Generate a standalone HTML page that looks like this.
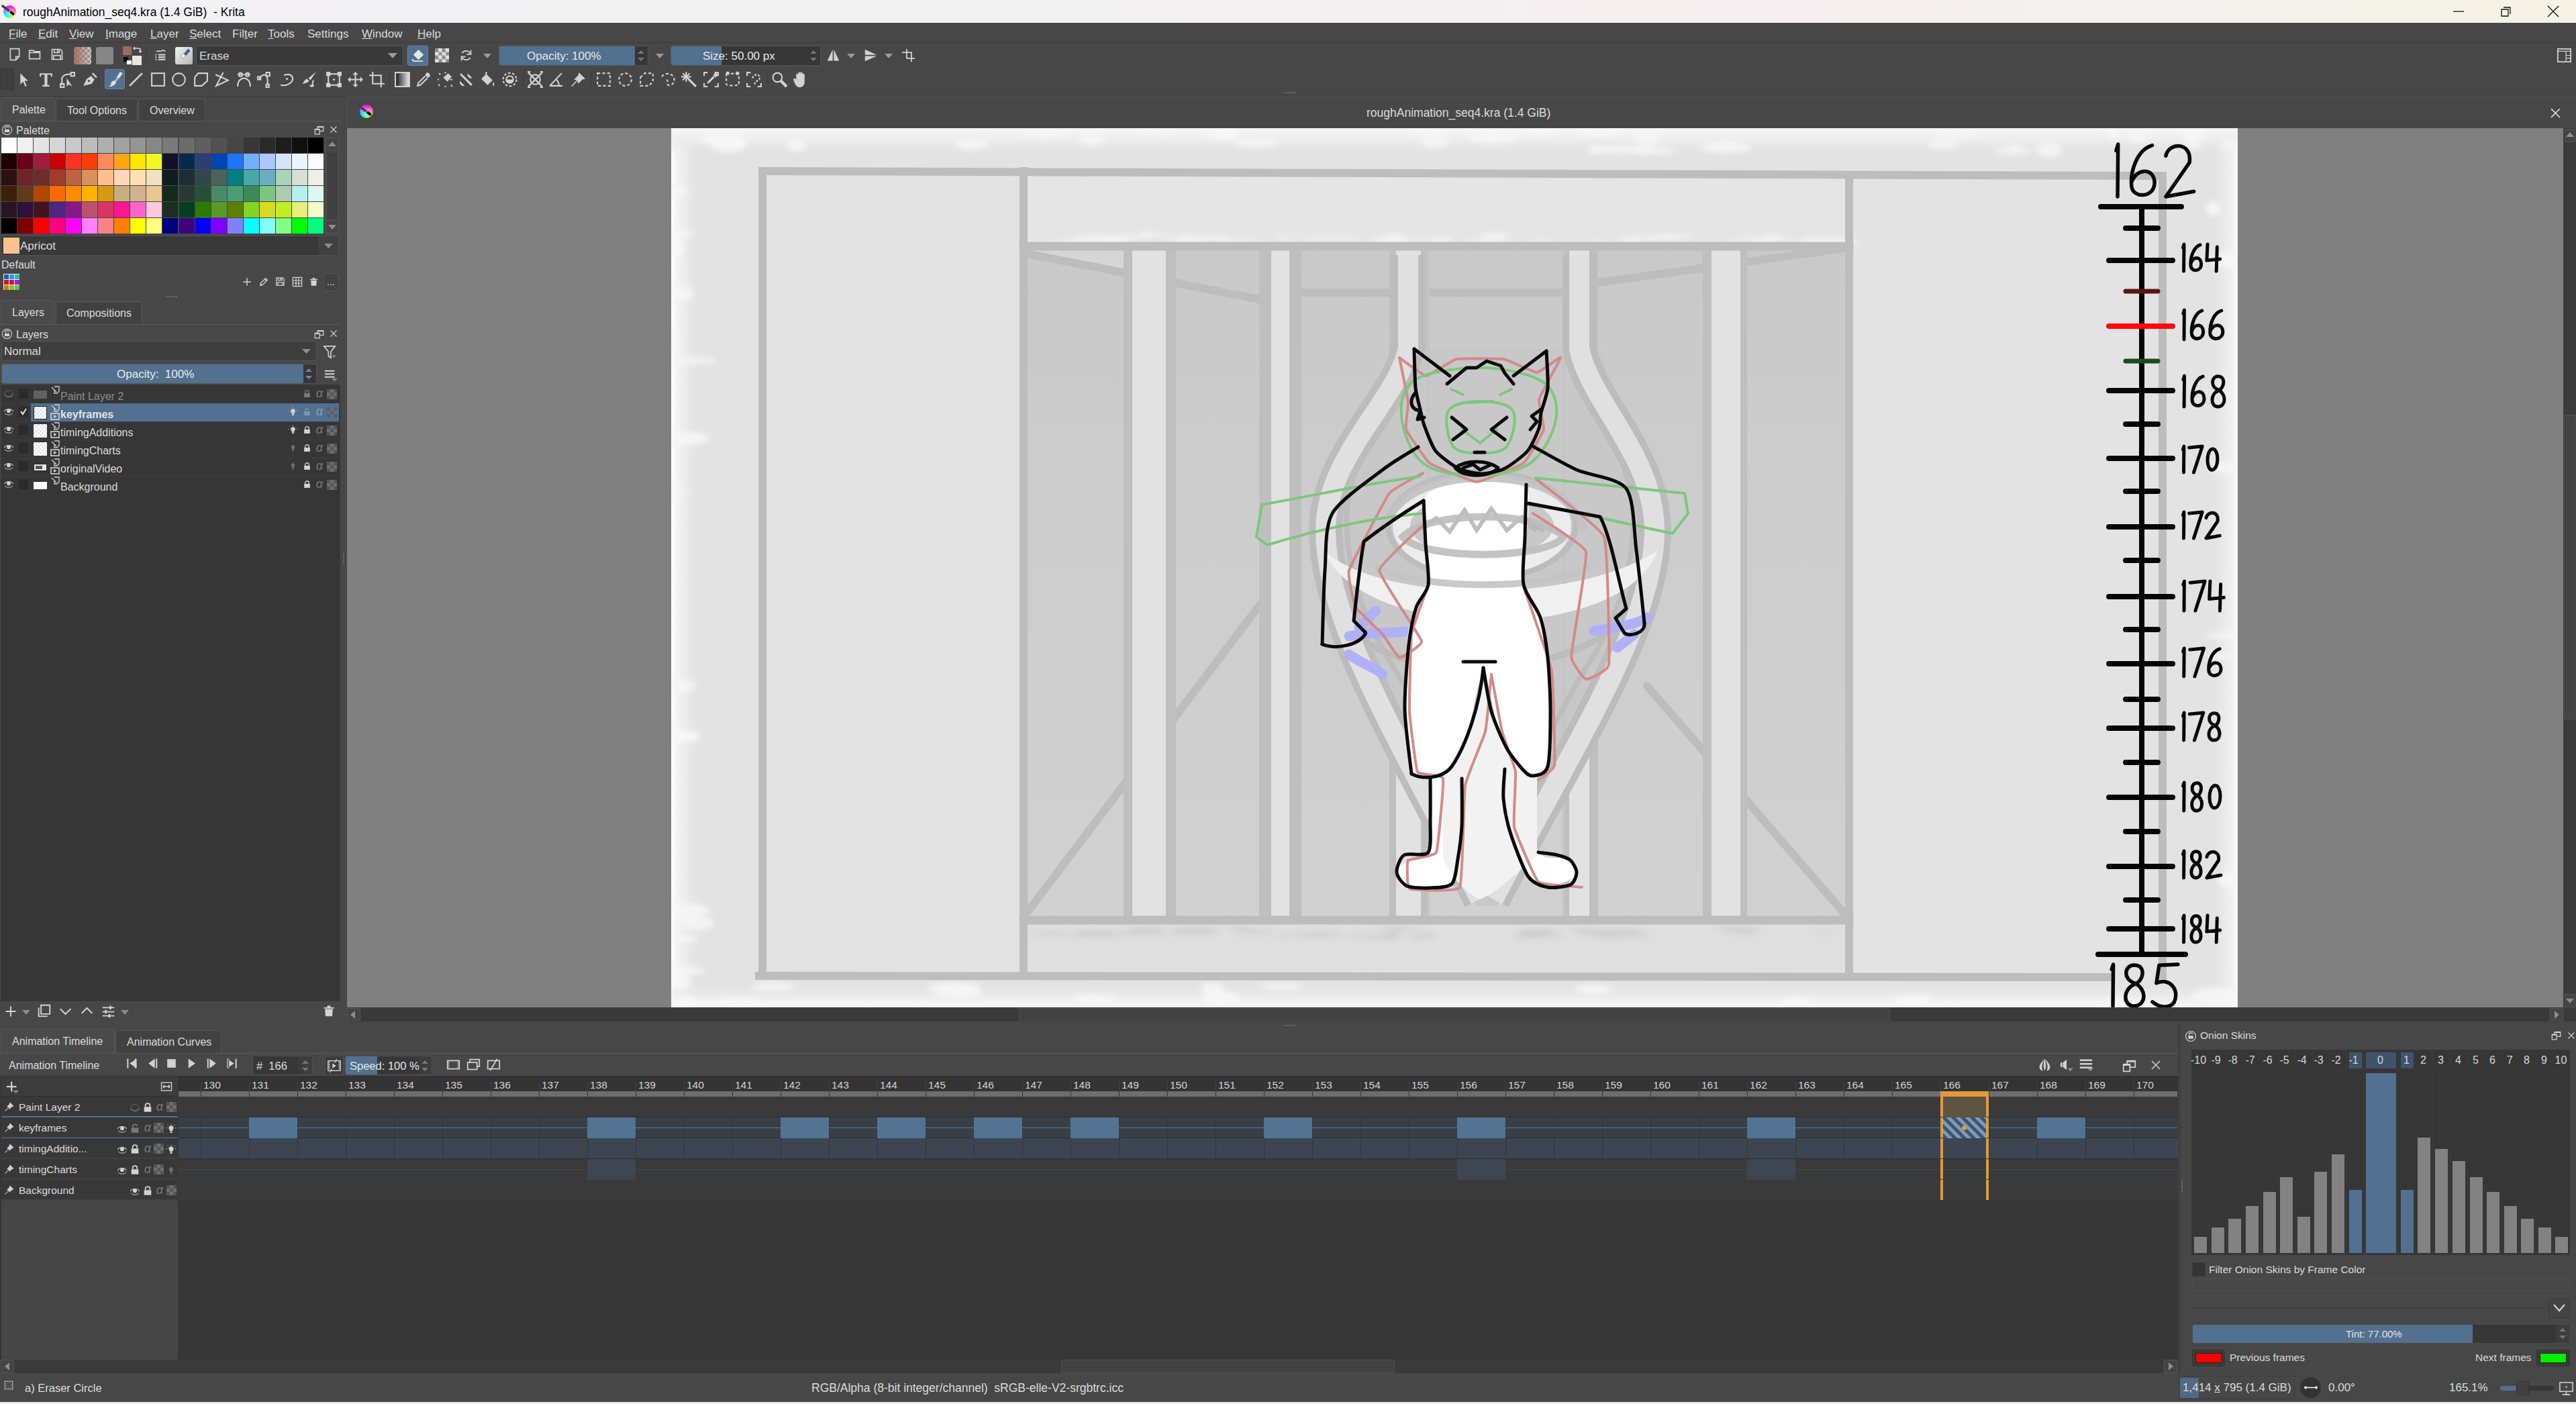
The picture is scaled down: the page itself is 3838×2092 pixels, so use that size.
<!DOCTYPE html>
<html><head><meta charset="utf-8"><title>Krita</title>
<style>
*{margin:0;padding:0;box-sizing:border-box}
html,body{width:3838px;height:2092px;overflow:hidden;background:#474747;font-family:"Liberation Sans",sans-serif;color:#d4d4d4}
.a{position:absolute}
.t{position:absolute;white-space:nowrap;line-height:1}
svg{position:absolute;overflow:visible}

</style></head><body>

<div class="a" style="left:0;top:0;width:3838px;height:34px;background:linear-gradient(90deg,#f3f1f4 0%,#f2f2f2 30%,#f4eef0 52%,#f3f2f0 70%,#f6f2e6 100%)"></div>
<!-- menu -->
<div class="a" style="left:0;top:34px;width:3838px;height:29px;background:#474747"></div>
<div class="a" style="left:0;top:62px;width:3838px;height:1px;background:#3c3c3c"></div>
<!-- toolbars -->
<div class="a" style="left:0;top:63px;width:3838px;height:81px;background:#474747"></div>
<div class="a" style="left:0;top:143px;width:3838px;height:1px;background:#3e3e3e"></div>
<!-- left dock -->
<div class="a" style="left:0;top:144px;width:512px;height:1381px;background:#474747"></div>
<!-- canvas window -->
<div class="a" style="left:517px;top:144px;width:3321px;height:47px;background:#474747;border-top:1px solid #575757;border-left:1px solid #575757;border-radius:3px 0 0 0"></div>
<div class="a" style="left:517px;top:191px;width:3302px;height:1310px;background:#808080"></div>
<div class="a" style="left:3819px;top:191px;width:19px;height:1310px;background:#3a3a3a"></div>
<div class="a" style="left:517px;top:1501px;width:3321px;height:21px;background:#3a3a3a"></div>
<!-- bottom docks -->
<div class="a" style="left:0;top:1525px;width:3838px;height:521px;background:#474747"></div>
<div class="a" style="left:0;top:1603px;width:3245px;height:423px;background:#383838"></div>
<div class="a" style="left:2px;top:1789px;width:263px;height:237px;background:#464646"></div>
<div class="a" style="left:0;top:2026px;width:3245px;height:20px;background:#3a3a3a"></div>
<!-- status bar -->
<div class="a" style="left:0;top:2046px;width:3838px;height:43px;background:#474747"></div>
<div class="a" style="left:0;top:2089px;width:3838px;height:3px;background:#e8e8e8"></div>

<div class="a" style="left:0;top:0;width:3838px;height:34px;background:linear-gradient(90deg,#f3f1f4 0%,#f2f2f2 38%,#f4f0f1 55%,#f6eef0 70%,#f3f2ef 84%,#f6f2e4 100%)"></div>
<div class="a" style="left:4.5px;top:7.5px;width:19.0px;height:19.0px;border-radius:50%;background:radial-gradient(circle at 50% 50%,rgba(255,255,255,0.55) 0,rgba(255,255,255,0) 60%),conic-gradient(#ff00ff 0deg,#ff5ab4 70deg,#ff9a50 105deg,#ffff00 135deg,#80ff80 170deg,#00ffff 220deg,#50b0ff 255deg,#a070ff 295deg,#ff00ff 360deg)"></div><svg style="left:3.0px;top:8.0px" width="22.0" height="16.0" viewBox="0 0 22 16"><path d="M1 1 L11 8.5" stroke="#454545" stroke-width="3.6" stroke-linecap="round"/><path d="M11 8.5 L13.5 10.3" stroke="#cfcfcf" stroke-width="2.6"/><path d="M13.5 10.3 L16.5 12.8" stroke="#111" stroke-width="4" stroke-linecap="round"/></svg>
<div class="t" style="left:34px;top:10px;font-size:17.5px;color:#000">roughAnimation_seq4.kra (1.4 GiB)&nbsp; - Krita</div>
<svg style="left:3654px;top:10px" width="18" height="14" viewBox="0 0 18 14"><path d="M1 7 H17" stroke="#111" stroke-width="1.3"/></svg>
<svg style="left:3724px;top:8px" width="18" height="18" viewBox="0 0 18 18"><path d="M3 6 H13 V16 H3 Z M6 3 H16 V13" stroke="#111" stroke-width="1.3" fill="none"/></svg>
<svg style="left:3795px;top:8px" width="18" height="18" viewBox="0 0 18 18"><path d="M1 1 L17 17 M17 1 L1 17" stroke="#111" stroke-width="1.4"/></svg>
<div class="a" style="left:0;top:34px;width:3838px;height:30px;background:#474747;border-bottom:1px solid #3b3b3b"></div>
<div class="t" style="left:13px;top:41.5px;font-size:17px;color:#dadada"><u>F</u>ile</div>
<div class="t" style="left:57px;top:41.5px;font-size:17px;color:#dadada"><u>E</u>dit</div>
<div class="t" style="left:103px;top:41.5px;font-size:17px;color:#dadada"><u>V</u>iew</div>
<div class="t" style="left:157px;top:41.5px;font-size:17px;color:#dadada"><u>I</u>mage</div>
<div class="t" style="left:224px;top:41.5px;font-size:17px;color:#dadada"><u>L</u>ayer</div>
<div class="t" style="left:282px;top:41.5px;font-size:17px;color:#dadada"><u>S</u>elect</div>
<div class="t" style="left:346px;top:41.5px;font-size:17px;color:#dadada">Fil<u>t</u>er</div>
<div class="t" style="left:399px;top:41.5px;font-size:17px;color:#dadada"><u>T</u>ools</div>
<div class="t" style="left:458px;top:41.5px;font-size:17px;color:#dadada">Settin<u>g</u>s</div>
<div class="t" style="left:539px;top:41.5px;font-size:17px;color:#dadada"><u>W</u>indow</div>
<div class="t" style="left:622px;top:41.5px;font-size:17px;color:#dadada"><u>H</u>elp</div>
<svg style="left:12px;top:71px" width="20" height="20" viewBox="0 0 24 24"><path d="M4 2 H20 V16 L14 22 H4 Z M20 16 H14 V22" stroke="#d2d2d2" fill="none" stroke-width="2" stroke-linejoin="miter"/></svg>
<svg style="left:42px;top:71px" width="20" height="20" viewBox="0 0 24 24"><path d="M2 5 H9 L11 7 H21 V20 H2 Z M2 9 H21" stroke="#d2d2d2" fill="none" stroke-width="2" stroke-linejoin="miter"/></svg>
<svg style="left:75px;top:71px" width="20" height="20" viewBox="0 0 24 24"><path d="M3 3 H18 L21 6 V21 H3 Z M7 3 V9 H16 V3 M13 4 V8 M6 21 V14 H18 V21" stroke="#d2d2d2" fill="none" stroke-width="2" stroke-linejoin="miter"/></svg>
<div class="a" style="left:110px;top:70px;width:26px;height:26px;border-radius:3px;background:linear-gradient(90deg,#a06d64,rgba(160,109,100,0.1)),repeating-conic-gradient(#d8d8d8 0 25%,#9a9a9a 0 50%) 0 0/8px 8px"></div>
<div class="a" style="left:143px;top:70px;width:26px;height:26px;border-radius:3px;background:#858585"></div>
<div class="a" style="left:183px;top:69px;width:13px;height:13px;background:#9c6a61"></div>
<div class="a" style="left:197px;top:83px;width:14px;height:14px;background:#ece6df"></div>
<div class="a" style="left:184px;top:85px;width:7px;height:7px;background:#000"></div>
<div class="a" style="left:189px;top:90px;width:7px;height:6px;background:#fff"></div>
<svg style="left:198px;top:68px" width="14" height="14" viewBox="0 0 14 14"><path d="M3 2 L1 4 L3 6 M1 4 H9 L11 6 M9 8 L11 10 L13 8 M11 10 V4" stroke="#d2d2d2" stroke-width="1.5" fill="none"/></svg>
<div class="a" style="left:217px;top:73px;width:1px;height:20px;background:#3a3a3a"></div>
<svg style="left:228px;top:72px" width="21" height="21" viewBox="0 0 24 24"><path d="M6 6 C9 2 12 7 15 4 C17 3 19 4 21 5" stroke="#d2d2d2" fill="none" stroke-width="2" stroke-linejoin="miter"/><path d="M4 11 H6 M9 11 H21 M4 15 H6 M9 15 H21 M4 19 H6 M9 19 H21" stroke="#d2d2d2" stroke-width="2.4"/></svg>
<div class="a" style="left:261px;top:70px;width:26px;height:26px;border-radius:3px;background:linear-gradient(135deg,#f0f0f0,#b8b8b8)"></div>
<svg style="left:266px;top:70px" width="20" height="20" viewBox="0 0 24 24"><path d="M9 13 L17 3 L21 7 L13 16 Z" fill="#3c5d9c"/><path d="M4 17 L9 12 L13 16 L9 20 Z" fill="#fafafa" stroke="#777" stroke-width="0.8"/></svg>
<div class="a" style="left:292px;top:68px;width:309px;height:30px;background:#393939;border:1px solid #575757;border-radius:3px"></div>
<div class="t" style="left:297px;top:75px;font-size:17px;color:#d8d8d8">Erase</div>
<svg style="left:578px;top:79px" width="14" height="9" viewBox="0 0 14 9"><path d="M0 0 H14 L7 8 Z" fill="#9a9a9a"/></svg>
<div class="a" style="left:607px;top:68px;width:31px;height:30px;background:#52708f;border:1px solid #6a88a6;border-radius:3px"></div>
<svg style="left:611px;top:71px" width="23" height="23" viewBox="0 0 24 24"><path d="M13 3 L21 11 L13 19 L5 11 Z" fill="#e6e6e6"/><path d="M3 18 L6 21 H20" stroke="#e6e6e6" fill="none" stroke-width="2" stroke-linejoin="miter"/></svg>
<div class="a" style="left:648px;top:72px;width:21px;height:21px;background:repeating-conic-gradient(#e0e0e0 0 25%,#8c8c8c 0 50%) 0 0/10.5px 10.5px"></div>
<svg style="left:684px;top:72px" width="21" height="21" viewBox="0 0 24 24"><path d="M19 9 A8 8 0 0 0 5 8 M5 15 A8 8 0 0 0 19 16" stroke="#d2d2d2" fill="none" stroke-width="2" stroke-linejoin="miter" stroke-width="2.2"/><path d="M20 3 V10 H13 M4 21 V14 H11" stroke="#d2d2d2" fill="none" stroke-width="2" stroke-linejoin="miter" stroke-width="2.2" fill="none"/></svg>
<svg style="left:720px;top:80px" width="12" height="8" viewBox="0 0 12 8"><path d="M0 0 H12 L6 7 Z" fill="#9a9a9a"/></svg>
<div class="a" style="left:743px;top:68px;width:223px;height:30px;background:#363636;border:1px solid #555;border-radius:3px;overflow:hidden"><div class="a" style="left:0;top:0;width:202px;height:28px;background:#52708f"></div></div>
<div class="t" style="left:785px;top:75px;font-size:17px;color:#e8e8e8">Opacity: 100%</div>
<svg style="left:948px;top:72px" width="14" height="22" viewBox="0 0 14 22"><path d="M2 8 L7 3 L12 8 Z M2 14 L7 19 L12 14 Z" fill="#777"/></svg>
<svg style="left:977px;top:80px" width="12" height="8" viewBox="0 0 12 8"><path d="M0 0 H12 L6 7 Z" fill="#9a9a9a"/></svg>
<div class="a" style="left:999px;top:68px;width:224px;height:30px;background:#363636;border:1px solid #555;border-radius:3px;overflow:hidden"><div class="a" style="left:0;top:0;width:75px;height:28px;background:#52708f"></div></div>
<div class="t" style="left:1047px;top:75px;font-size:17px;color:#e8e8e8">Size: 50.00 px</div>
<svg style="left:1205px;top:72px" width="14" height="22" viewBox="0 0 14 22"><path d="M2 8 L7 3 L12 8 Z M2 14 L7 19 L12 14 Z" fill="#777"/></svg>
<svg style="left:1231px;top:72px" width="21" height="21" viewBox="0 0 24 24"><path d="M11 2 V21 H2 Z M13 2 V21 H22 Z" fill="#d2d2d2"/></svg>
<svg style="left:1262px;top:80px" width="12" height="8" viewBox="0 0 12 8"><path d="M0 0 H12 L6 7 Z" fill="#9a9a9a"/></svg>
<svg style="left:1287px;top:72px" width="21" height="21" viewBox="0 0 24 24"><path d="M2 2 L22 11 H2 Z M2 13 H22 L2 22 Z" fill="#d2d2d2"/></svg>
<svg style="left:1318px;top:80px" width="12" height="8" viewBox="0 0 12 8"><path d="M0 0 H12 L6 7 Z" fill="#9a9a9a"/></svg>
<svg style="left:1343px;top:72px" width="21" height="21" viewBox="0 0 24 24"><path d="M9 1 V17 H23 M1 7 H17 V23" stroke="#d2d2d2" fill="none" stroke-width="2" stroke-linejoin="miter" stroke-width="2.5"/></svg>
<svg style="left:3810px;top:72px" width="21" height="21" viewBox="0 0 24 24"><rect x="1" y="1" width="22" height="22" stroke="#d2d2d2" fill="none" stroke-width="2" stroke-linejoin="miter" stroke-width="1.4"/><path d="M1 5 H23 M15 5 V23 M15 12 H23 M15 17 H23" stroke="#d2d2d2" stroke-width="1.4"/></svg>
<div class="a" style="left:0;top:102px;width:21px;height:32px;background:#3e3e3e;border:1px solid #383838"></div>
<div class="a" style="left:156px;top:103px;width:30px;height:30px;background:#52708f;border:1px solid #6683a0;border-radius:3px"></div>
<svg style="left:22.5px;top:105.5px" width="25" height="25" viewBox="0 0 24 24"><path d="M7 3 L7 19 L11 15 L14 22 L16 21 L13 14 L18 14 Z" fill="#d2d2d2"/></svg>
<svg style="left:55.5px;top:105.5px" width="25" height="25" viewBox="0 0 24 24"><path d="M3 3 H21 V8 H19 V5 H14 V20 H17 V22 H7 V20 H10 V5 H5 V8 H3 Z" fill="#d2d2d2"/></svg>
<svg style="left:87.5px;top:105.5px" width="25" height="25" viewBox="0 0 24 24"><path d="M4 20 V12 C4 6 10 4 18 4" stroke="#d2d2d2" fill="none" stroke-width="2" stroke-linejoin="miter"/><rect x="2" y="18" width="5" height="5" stroke="#d2d2d2" fill="none" stroke-width="2" stroke-linejoin="miter"/><rect x="17" y="2" width="5" height="5" stroke="#d2d2d2" fill="none" stroke-width="2" stroke-linejoin="miter"/><path d="M11 10 L11 22 L14 19 L19 22 Z" fill="#d2d2d2"/></svg>
<svg style="left:120.5px;top:105.5px" width="25" height="25" viewBox="0 0 24 24"><path d="M3 21 L8 11 L14 7 L19 12 L15 18 Z" fill="#d2d2d2"/><path d="M16 3 L22 9" stroke="#d2d2d2" stroke-width="2.5"/><circle cx="11" cy="14" r="1.6" fill="#474747"/></svg>
<svg style="left:158.5px;top:105.5px" width="25" height="25" viewBox="0 0 24 24"><path d="M19 1 L23 3 L17 11 L14 9 Z" fill="#e0e0e0"/><path d="M13.5 9.8 L16.3 11.8 L15.4 13 L12.6 11 Z M12 11.8 L14.8 13.8 L14 15 L11.2 13 Z" fill="#e0e0e0"/><path d="M10.5 13.5 L13.5 15.5 C13 19 9 22 3 22 C6 20 7 18 6 17 C7 15 9 14 10.5 13.5 Z" fill="#e0e0e0"/></svg>
<svg style="left:189.5px;top:105.5px" width="25" height="25" viewBox="0 0 24 24"><path d="M3 21 L21 3" stroke="#d2d2d2" stroke-width="2.5"/></svg>
<svg style="left:222.5px;top:105.5px" width="25" height="25" viewBox="0 0 24 24"><rect x="3" y="3" width="18" height="18" stroke="#d2d2d2" fill="none" stroke-width="2" stroke-linejoin="miter" stroke-width="2.5"/></svg>
<svg style="left:253.5px;top:105.5px" width="25" height="25" viewBox="0 0 24 24"><circle cx="12" cy="12" r="9" stroke="#d2d2d2" fill="none" stroke-width="2" stroke-linejoin="miter" stroke-width="2.5"/></svg>
<svg style="left:286.5px;top:105.5px" width="25" height="25" viewBox="0 0 24 24"><path d="M8 3 H21 V14 L13 21 H3 V9 Z" stroke="#d2d2d2" fill="none" stroke-width="2" stroke-linejoin="miter" stroke-width="2.5"/></svg>
<svg style="left:317.5px;top:105.5px" width="25" height="25" viewBox="0 0 24 24"><path d="M14 2 L4 21 L21 13 L3 5" stroke="#d2d2d2" fill="none" stroke-width="2" stroke-linejoin="miter" stroke-width="2.5"/></svg>
<svg style="left:350.5px;top:105.5px" width="25" height="25" viewBox="0 0 24 24"><path d="M3 22 C3 6 21 6 21 22" stroke="#d2d2d2" fill="none" stroke-width="2" stroke-linejoin="miter" stroke-width="2.5"/><circle cx="7" cy="5" r="2.5" stroke="#d2d2d2" fill="none" stroke-width="2" stroke-linejoin="miter"/><circle cx="17" cy="5" r="2.5" stroke="#d2d2d2" fill="none" stroke-width="2" stroke-linejoin="miter"/><path d="M3 5 H21" stroke="#d2d2d2" stroke-width="1.5"/></svg>
<svg style="left:381.5px;top:105.5px" width="25" height="25" viewBox="0 0 24 24"><path d="M4 12 C8 3 15 3 16 12 V20" stroke="#d2d2d2" fill="none" stroke-width="2" stroke-linejoin="miter" stroke-width="2.5"/><rect x="2" y="8" width="4" height="4" stroke="#d2d2d2" fill="none" stroke-width="2" stroke-linejoin="miter"/><rect x="14" y="2" width="5" height="5" stroke="#d2d2d2" fill="none" stroke-width="2" stroke-linejoin="miter"/><rect x="14" y="19" width="4" height="4" stroke="#d2d2d2" fill="none" stroke-width="2" stroke-linejoin="miter"/></svg>
<svg style="left:414.5px;top:105.5px" width="25" height="25" viewBox="0 0 24 24"><path d="M3 20 C12 22 22 16 20 9 C18 4 12 4 8 6" stroke="#d2d2d2" fill="none" stroke-width="2" stroke-linejoin="miter" stroke-width="2.5"/><circle cx="12" cy="11" r="1.5" fill="#d2d2d2"/></svg>
<svg style="left:446.5px;top:105.5px" width="25" height="25" viewBox="0 0 24 24"><path d="M23 1 L12 10 L15 13 Z M10 11 C6 12 6 16 3 18 C8 18 12 16 13 14 Z" fill="#d2d2d2"/><path d="M19 13 L17 22 M14 20 L17 22 L20 20" stroke="#d2d2d2" stroke-width="2"/></svg>
<svg style="left:484.5px;top:105.5px" width="25" height="25" viewBox="0 0 24 24"><rect x="4" y="4" width="16" height="16" stroke="#d2d2d2" fill="none" stroke-width="2" stroke-linejoin="miter" stroke-width="2.5"/><rect x="1" y="1" width="6" height="6" fill="#d2d2d2"/><rect x="17" y="1" width="6" height="6" fill="#d2d2d2"/><rect x="1" y="17" width="6" height="6" fill="#d2d2d2"/><rect x="17" y="17" width="6" height="6" fill="#d2d2d2"/><circle cx="12" cy="12" r="1.5" fill="#d2d2d2"/></svg>
<svg style="left:516.5px;top:105.5px" width="25" height="25" viewBox="0 0 24 24"><path d="M12 1 L16 5 H13 V11 H19 V8 L23 12 L19 16 V13 H13 V19 H16 L12 23 L8 19 H11 V13 H5 V16 L1 12 L5 8 V11 H11 V5 H8 Z" fill="#d2d2d2"/></svg>
<svg style="left:548.5px;top:105.5px" width="25" height="25" viewBox="0 0 24 24"><path d="M6 1 V18 H23 M1 6 H18 V23" stroke="#d2d2d2" fill="none" stroke-width="2" stroke-linejoin="miter" stroke-width="3"/></svg>
<svg style="left:586.5px;top:105.5px" width="25" height="25" viewBox="0 0 24 24"><defs><linearGradient id="gg" x1="0" x2="1"><stop offset="0" stop-color="#111"/><stop offset="1" stop-color="#eee"/></linearGradient></defs><rect x="2" y="2" width="20" height="20" fill="url(#gg)" stroke="#d2d2d2" stroke-width="2"/></svg>
<svg style="left:618.5px;top:105.5px" width="25" height="25" viewBox="0 0 24 24"><path d="M15 3 C17 1 21 3 21 7 L18 10 L14 6 Z" fill="#d2d2d2"/><path d="M14 7 L4 17 L3 21 L7 20 L17 10" stroke="#d2d2d2" fill="none" stroke-width="2" stroke-linejoin="miter"/></svg>
<svg style="left:650.5px;top:105.5px" width="25" height="25" viewBox="0 0 24 24"><path d="M9 9 L16 3 L21 8 L15 15 Z" fill="#d2d2d2"/><path d="M12 1 V3 M3 12 H1 M5 5 L3 3 M12 21 V23 M20 20 L22 22 M19 12 H22 M4 19 L2 21" stroke="#d2d2d2" stroke-width="2"/></svg>
<svg style="left:681.5px;top:105.5px" width="25" height="25" viewBox="0 0 24 24"><path d="M3 5 L5 3 L21 19 L19 21 Z M14 3 L21 10 L17 10 L14 7 Z M3 14 L10 21 H6 L3 18 Z" fill="#d2d2d2"/></svg>
<svg style="left:713.5px;top:105.5px" width="25" height="25" viewBox="0 0 24 24"><path d="M3 11 L10 4 L19 13 L12 20 Z" fill="#d2d2d2"/><path d="M10 1 V7" stroke="#d2d2d2" stroke-width="2"/><path d="M20 15 C21 17 22 19 21 21 C19 21 19 18 20 15 Z" fill="#d2d2d2"/></svg>
<svg style="left:746.5px;top:105.5px" width="25" height="25" viewBox="0 0 24 24"><circle cx="12" cy="12" r="9.5" stroke="#d2d2d2" fill="none" stroke-width="2" stroke-linejoin="miter" stroke-dasharray="3.5 2.5"/><circle cx="12" cy="12" r="5" stroke="#d2d2d2" fill="none" stroke-width="2" stroke-linejoin="miter"/><path d="M7 12 H17 V15 C15 18 9 18 7 15 Z" fill="#d2d2d2"/></svg>
<svg style="left:784.5px;top:105.5px" width="25" height="25" viewBox="0 0 24 24"><path d="M2 2 L22 22 M22 2 L2 22" stroke="#d2d2d2" stroke-width="2.2"/><circle cx="12" cy="12" r="7" stroke="#d2d2d2" fill="none" stroke-width="2" stroke-linejoin="miter"/><path d="M1 1 H5 M1 23 H5 M19 1 H23 M19 23 H23" stroke="#d2d2d2" stroke-width="2"/></svg>
<svg style="left:815.5px;top:105.5px" width="25" height="25" viewBox="0 0 24 24"><path d="M3 21 L20 3 M3 21 H21" stroke="#d2d2d2" fill="none" stroke-width="2" stroke-linejoin="miter" stroke-width="2.5"/><path d="M12 12 C15 14 16 18 16 21" stroke="#d2d2d2" fill="none" stroke-width="2" stroke-linejoin="miter"/></svg>
<svg style="left:848.5px;top:105.5px" width="25" height="25" viewBox="0 0 24 24"><path d="M13 2 L22 11 L18 12 L12 18 L11 14 L3 22 L2 21 L10 13 L6 12 L12 6 Z" fill="#d2d2d2"/></svg>
<svg style="left:886.5px;top:105.5px" width="25" height="25" viewBox="0 0 24 24"><rect x="3" y="3" width="18" height="18" stroke="#d2d2d2" fill="none" stroke-width="2" stroke-linejoin="miter" stroke-width="2.5" stroke-dasharray="4 3"/></svg>
<svg style="left:918.5px;top:105.5px" width="25" height="25" viewBox="0 0 24 24"><circle cx="12" cy="12" r="9" stroke="#d2d2d2" fill="none" stroke-width="2" stroke-linejoin="miter" stroke-width="2.5" stroke-dasharray="4 3"/></svg>
<svg style="left:950.5px;top:105.5px" width="25" height="25" viewBox="0 0 24 24"><path d="M3 9 L9 3 H21 V15 L15 21 H3 Z" stroke="#d2d2d2" fill="none" stroke-width="2" stroke-linejoin="miter" stroke-width="2.5" stroke-dasharray="4 3"/></svg>
<svg style="left:982.5px;top:105.5px" width="25" height="25" viewBox="0 0 24 24"><path d="M3 8 C6 2 17 2 20 9 C23 16 16 22 12 20 C9 18 13 14 10 12" stroke="#d2d2d2" fill="none" stroke-width="2" stroke-linejoin="miter" stroke-width="2.5" stroke-dasharray="4 3"/></svg>
<svg style="left:1013.5px;top:105.5px" width="25" height="25" viewBox="0 0 24 24"><path d="M11 11 L22 22" stroke="#d2d2d2" stroke-width="3"/><path d="M8 1 V15 M1 8 H15 M3 3 L13 13 M13 3 L3 13" stroke="#d2d2d2" stroke-width="2"/></svg>
<svg style="left:1046.5px;top:105.5px" width="25" height="25" viewBox="0 0 24 24"><path d="M2 7 V2 H7 M17 2 H22 V7 M22 17 V22 H17 M7 22 H2 V17" stroke="#d2d2d2" fill="none" stroke-width="2" stroke-linejoin="miter" stroke-width="2.5"/><path d="M17 3 C19 2 22 4 21 7 L18 9 L15 6 Z M15 7 L7 15 L6 18 L9 17 L17 9" fill="#d2d2d2"/></svg>
<svg style="left:1078.5px;top:105.5px" width="25" height="25" viewBox="0 0 24 24"><path d="M3 5 C3 3 21 3 21 5 V19 C21 21 3 21 3 19 Z" stroke="#d2d2d2" fill="none" stroke-width="2" stroke-linejoin="miter" stroke-width="2.5" stroke-dasharray="4 3"/><circle cx="5" cy="3" r="2.5" fill="#d2d2d2"/><circle cx="19" cy="3" r="2.5" fill="#d2d2d2"/></svg>
<svg style="left:1110.5px;top:105.5px" width="25" height="25" viewBox="0 0 24 24"><path d="M2 7 V2 H7 M2 17 V22 H7 M17 22 H22 V17" stroke="#d2d2d2" fill="none" stroke-width="2" stroke-linejoin="miter" stroke-width="2.5"/><path d="M10 10 C10 4 21 3 20 10 C19 15 13 13 13 19" stroke="#d2d2d2" fill="none" stroke-width="2" stroke-linejoin="miter" stroke-width="2.2" stroke-dasharray="3 2"/></svg>
<svg style="left:1148.5px;top:105.5px" width="25" height="25" viewBox="0 0 24 24"><circle cx="9" cy="9" r="6.5" stroke="#d2d2d2" fill="none" stroke-width="2" stroke-linejoin="miter" stroke-width="3"/><path d="M13 13 L22 22" stroke="#d2d2d2" stroke-width="4"/></svg>
<svg style="left:1179.5px;top:105.5px" width="25" height="25" viewBox="0 0 24 24"><path d="M6 12 V5 C6 3 9 3 9 5 V11 V3 C9 1 12 1 12 3 V11 V3 C12 1 15 1 15 3 V11 V5 C15 3 18 3 18 5 V15 C18 20 15 23 11 23 C7 23 5 20 3 15 L2 12 C2 10 4 10 5 11 Z" fill="#d2d2d2"/></svg>
<div class="a" style="left:146px;top:108px;width:1px;height:20px;background:#3a3a3a"></div>
<div class="a" style="left:478px;top:108px;width:1px;height:20px;background:#3a3a3a"></div>
<div class="a" style="left:580px;top:108px;width:1px;height:20px;background:#3a3a3a"></div>
<div class="a" style="left:779px;top:108px;width:1px;height:20px;background:#3a3a3a"></div>
<div class="a" style="left:880px;top:108px;width:1px;height:20px;background:#3a3a3a"></div>
<div class="a" style="left:1143px;top:108px;width:1px;height:20px;background:#3a3a3a"></div>
<div class="a" style="left:1914px;top:137px;width:16px;height:2px;background:repeating-linear-gradient(90deg,#8a8a8a 0 1px,transparent 1px 3px)"></div>
<div class="a" style="left:0;top:143px;width:3838px;height:1px;background:#3d3d3d"></div>
<div class="a" style="left:1px;top:145px;width:81px;height:36px;background:#4a4a4a;border:1px solid #575757;border-bottom:none;border-radius:3px 3px 0 0"></div><div class="t" style="left:18px;top:156px;font-size:16px;color:#dcdcdc;">Palette</div>
<div class="a" style="left:83px;top:147px;width:122px;height:34px;background:#414141;border:1px solid #575757;border-bottom:none;border-radius:3px 3px 0 0"></div><div class="t" style="left:100px;top:157px;font-size:16px;color:#dcdcdc;">Tool Options</div>
<div class="a" style="left:206px;top:147px;width:100px;height:34px;background:#414141;border:1px solid #575757;border-bottom:none;border-radius:3px 3px 0 0"></div><div class="t" style="left:223px;top:157px;font-size:16px;color:#dcdcdc;">Overview</div>
<div class="a" style="left:0;top:180px;width:507px;height:1px;background:#5a5a5a"></div>
<svg style="left:2px;top:185px" width="17" height="17" viewBox="0 0 24 24"><circle cx="12" cy="12" r="10" stroke="#d2d2d2" stroke-width="1.6" fill="none"/><path d="M8.5 10 V8 C8.5 4.5 15.5 4.5 15.5 8" stroke="#d2d2d2" stroke-width="1.8" fill="none"/><rect x="7" y="11" width="10" height="6" fill="#d2d2d2"/></svg><div class="t" style="left:24px;top:187px;font-size:16px;color:#dcdcdc;">Palette</div><svg style="left:468px;top:186px" width="15" height="15" viewBox="0 0 24 24"><path d="M2 10 H13 V22 H2 Z M8 4 H22 V15 H13 M8 10 V4" stroke="#d2d2d2" stroke-width="2" fill="none"/><path d="M8 5 H22" stroke="#d2d2d2" stroke-width="3"/><path d="M2 11 H13" stroke="#d2d2d2" stroke-width="3"/></svg><svg style="left:491px;top:187px" width="12" height="12" viewBox="0 0 24 24"><path d="M3 3 L21 21 M21 3 L3 21" stroke="#d2d2d2" stroke-width="2.2"/></svg>
<div class="a" style="left:1px;top:204px;width:483px;height:146px;background:#474747"></div>
<div class="a" style="left:2px;top:205px;width:23px;height:23px;background:#ffffff"></div>
<div class="a" style="left:26px;top:205px;width:23px;height:23px;background:#f0f0f0"></div>
<div class="a" style="left:50px;top:205px;width:23px;height:23px;background:#e4e4e4"></div>
<div class="a" style="left:74px;top:205px;width:23px;height:23px;background:#d6d6d6"></div>
<div class="a" style="left:98px;top:205px;width:23px;height:23px;background:#c9c9c9"></div>
<div class="a" style="left:122px;top:205px;width:23px;height:23px;background:#bcbcbc"></div>
<div class="a" style="left:146px;top:205px;width:23px;height:23px;background:#afafaf"></div>
<div class="a" style="left:170px;top:205px;width:23px;height:23px;background:#a1a1a1"></div>
<div class="a" style="left:194px;top:205px;width:23px;height:23px;background:#949494"></div>
<div class="a" style="left:218px;top:205px;width:23px;height:23px;background:#878787"></div>
<div class="a" style="left:242px;top:205px;width:23px;height:23px;background:#7a7a7a"></div>
<div class="a" style="left:267px;top:205px;width:23px;height:23px;background:#6c6c6c"></div>
<div class="a" style="left:291px;top:205px;width:23px;height:23px;background:#5f5f5f"></div>
<div class="a" style="left:315px;top:205px;width:23px;height:23px;background:#525252"></div>
<div class="a" style="left:339px;top:205px;width:23px;height:23px;background:#454545"></div>
<div class="a" style="left:363px;top:205px;width:23px;height:23px;background:#373737"></div>
<div class="a" style="left:387px;top:205px;width:23px;height:23px;background:#2a2a2a"></div>
<div class="a" style="left:411px;top:205px;width:23px;height:23px;background:#1d1d1d"></div>
<div class="a" style="left:435px;top:205px;width:23px;height:23px;background:#101010"></div>
<div class="a" style="left:459px;top:205px;width:23px;height:23px;background:#000000"></div>
<div class="a" style="left:2px;top:229px;width:23px;height:23px;background:#1f0000"></div>
<div class="a" style="left:26px;top:229px;width:23px;height:23px;background:#6b0019"></div>
<div class="a" style="left:50px;top:229px;width:23px;height:23px;background:#a01d3a"></div>
<div class="a" style="left:74px;top:229px;width:23px;height:23px;background:#cc0000"></div>
<div class="a" style="left:98px;top:229px;width:23px;height:23px;background:#ff3222"></div>
<div class="a" style="left:122px;top:229px;width:23px;height:23px;background:#ff3c00"></div>
<div class="a" style="left:146px;top:229px;width:23px;height:23px;background:#ff8a60"></div>
<div class="a" style="left:170px;top:229px;width:23px;height:23px;background:#ffa514"></div>
<div class="a" style="left:194px;top:229px;width:23px;height:23px;background:#ffe600"></div>
<div class="a" style="left:218px;top:229px;width:23px;height:23px;background:#f2f71f"></div>
<div class="a" style="left:242px;top:229px;width:23px;height:23px;background:#111127"></div>
<div class="a" style="left:267px;top:229px;width:23px;height:23px;background:#002d4d"></div>
<div class="a" style="left:291px;top:229px;width:23px;height:23px;background:#2c3e73"></div>
<div class="a" style="left:315px;top:229px;width:23px;height:23px;background:#0046b3"></div>
<div class="a" style="left:339px;top:229px;width:23px;height:23px;background:#1c74ff"></div>
<div class="a" style="left:363px;top:229px;width:23px;height:23px;background:#70afff"></div>
<div class="a" style="left:387px;top:229px;width:23px;height:23px;background:#aac8ff"></div>
<div class="a" style="left:411px;top:229px;width:23px;height:23px;background:#d2e4ff"></div>
<div class="a" style="left:435px;top:229px;width:23px;height:23px;background:#eaf6ff"></div>
<div class="a" style="left:459px;top:229px;width:23px;height:23px;background:#f8fcff"></div>
<div class="a" style="left:2px;top:253px;width:23px;height:23px;background:#2d1010"></div>
<div class="a" style="left:26px;top:253px;width:23px;height:23px;background:#6e2428"></div>
<div class="a" style="left:50px;top:253px;width:23px;height:23px;background:#6b2e2a"></div>
<div class="a" style="left:74px;top:253px;width:23px;height:23px;background:#a03c2a"></div>
<div class="a" style="left:98px;top:253px;width:23px;height:23px;background:#be6441"></div>
<div class="a" style="left:122px;top:253px;width:23px;height:23px;background:#d7915a"></div>
<div class="a" style="left:146px;top:253px;width:23px;height:23px;background:#ffbf8a"></div>
<div class="a" style="left:170px;top:253px;width:23px;height:23px;background:#ffd7b8"></div>
<div class="a" style="left:194px;top:253px;width:23px;height:23px;background:#ffe1b1"></div>
<div class="a" style="left:218px;top:253px;width:23px;height:23px;background:#f1e1c2"></div>
<div class="a" style="left:242px;top:253px;width:23px;height:23px;background:#111c20"></div>
<div class="a" style="left:267px;top:253px;width:23px;height:23px;background:#1c2d35"></div>
<div class="a" style="left:291px;top:253px;width:23px;height:23px;background:#2c4a4a"></div>
<div class="a" style="left:315px;top:253px;width:23px;height:23px;background:#4a6458"></div>
<div class="a" style="left:339px;top:253px;width:23px;height:23px;background:#008080"></div>
<div class="a" style="left:363px;top:253px;width:23px;height:23px;background:#4aa8a8"></div>
<div class="a" style="left:387px;top:253px;width:23px;height:23px;background:#6aaec6"></div>
<div class="a" style="left:411px;top:253px;width:23px;height:23px;background:#a8d4b8"></div>
<div class="a" style="left:435px;top:253px;width:23px;height:23px;background:#d6e0d6"></div>
<div class="a" style="left:459px;top:253px;width:23px;height:23px;background:#eef0e8"></div>
<div class="a" style="left:2px;top:277px;width:23px;height:23px;background:#3c2100"></div>
<div class="a" style="left:26px;top:277px;width:23px;height:23px;background:#5f3b1c"></div>
<div class="a" style="left:50px;top:277px;width:23px;height:23px;background:#b44600"></div>
<div class="a" style="left:74px;top:277px;width:23px;height:23px;background:#ff6a00"></div>
<div class="a" style="left:98px;top:277px;width:23px;height:23px;background:#ff8c00"></div>
<div class="a" style="left:122px;top:277px;width:23px;height:23px;background:#ffb200"></div>
<div class="a" style="left:146px;top:277px;width:23px;height:23px;background:#d89a14"></div>
<div class="a" style="left:170px;top:277px;width:23px;height:23px;background:#c4b07e"></div>
<div class="a" style="left:194px;top:277px;width:23px;height:23px;background:#d2b48c"></div>
<div class="a" style="left:218px;top:277px;width:23px;height:23px;background:#e8c88e"></div>
<div class="a" style="left:242px;top:277px;width:23px;height:23px;background:#142a1a"></div>
<div class="a" style="left:267px;top:277px;width:23px;height:23px;background:#263a32"></div>
<div class="a" style="left:291px;top:277px;width:23px;height:23px;background:#245230"></div>
<div class="a" style="left:315px;top:277px;width:23px;height:23px;background:#4a8a6a"></div>
<div class="a" style="left:339px;top:277px;width:23px;height:23px;background:#46a074"></div>
<div class="a" style="left:363px;top:277px;width:23px;height:23px;background:#3a8a5a"></div>
<div class="a" style="left:387px;top:277px;width:23px;height:23px;background:#78c87c"></div>
<div class="a" style="left:411px;top:277px;width:23px;height:23px;background:#b0cab0"></div>
<div class="a" style="left:435px;top:277px;width:23px;height:23px;background:#b4f0f0"></div>
<div class="a" style="left:459px;top:277px;width:23px;height:23px;background:#daf8f0"></div>
<div class="a" style="left:2px;top:301px;width:23px;height:23px;background:#2a1422"></div>
<div class="a" style="left:26px;top:301px;width:23px;height:23px;background:#2e1038"></div>
<div class="a" style="left:50px;top:301px;width:23px;height:23px;background:#421420"></div>
<div class="a" style="left:74px;top:301px;width:23px;height:23px;background:#4e2484"></div>
<div class="a" style="left:98px;top:301px;width:23px;height:23px;background:#881888"></div>
<div class="a" style="left:122px;top:301px;width:23px;height:23px;background:#c05070"></div>
<div class="a" style="left:146px;top:301px;width:23px;height:23px;background:#dc3464"></div>
<div class="a" style="left:170px;top:301px;width:23px;height:23px;background:#ff1493"></div>
<div class="a" style="left:194px;top:301px;width:23px;height:23px;background:#ff64c8"></div>
<div class="a" style="left:218px;top:301px;width:23px;height:23px;background:#ffc8dc"></div>
<div class="a" style="left:242px;top:301px;width:23px;height:23px;background:#1c2e20"></div>
<div class="a" style="left:267px;top:301px;width:23px;height:23px;background:#004020"></div>
<div class="a" style="left:291px;top:301px;width:23px;height:23px;background:#2a7c00"></div>
<div class="a" style="left:315px;top:301px;width:23px;height:23px;background:#5a982a"></div>
<div class="a" style="left:339px;top:301px;width:23px;height:23px;background:#5e8000"></div>
<div class="a" style="left:363px;top:301px;width:23px;height:23px;background:#84d420"></div>
<div class="a" style="left:387px;top:301px;width:23px;height:23px;background:#d8dc1e"></div>
<div class="a" style="left:411px;top:301px;width:23px;height:23px;background:#c0f020"></div>
<div class="a" style="left:435px;top:301px;width:23px;height:23px;background:#e4f07a"></div>
<div class="a" style="left:459px;top:301px;width:23px;height:23px;background:#f0ffc8"></div>
<div class="a" style="left:2px;top:325px;width:23px;height:23px;background:#000000"></div>
<div class="a" style="left:26px;top:325px;width:23px;height:23px;background:#800000"></div>
<div class="a" style="left:50px;top:325px;width:23px;height:23px;background:#ff0000"></div>
<div class="a" style="left:74px;top:325px;width:23px;height:23px;background:#ff0080"></div>
<div class="a" style="left:98px;top:325px;width:23px;height:23px;background:#ff00ff"></div>
<div class="a" style="left:122px;top:325px;width:23px;height:23px;background:#ff80ff"></div>
<div class="a" style="left:146px;top:325px;width:23px;height:23px;background:#ff8080"></div>
<div class="a" style="left:170px;top:325px;width:23px;height:23px;background:#ff8000"></div>
<div class="a" style="left:194px;top:325px;width:23px;height:23px;background:#ffff00"></div>
<div class="a" style="left:218px;top:325px;width:23px;height:23px;background:#ffff80"></div>
<div class="a" style="left:242px;top:325px;width:23px;height:23px;background:#000080"></div>
<div class="a" style="left:267px;top:325px;width:23px;height:23px;background:#400080"></div>
<div class="a" style="left:291px;top:325px;width:23px;height:23px;background:#0000ff"></div>
<div class="a" style="left:315px;top:325px;width:23px;height:23px;background:#8000ff"></div>
<div class="a" style="left:339px;top:325px;width:23px;height:23px;background:#8080ff"></div>
<div class="a" style="left:363px;top:325px;width:23px;height:23px;background:#00ffff"></div>
<div class="a" style="left:387px;top:325px;width:23px;height:23px;background:#80ffff"></div>
<div class="a" style="left:411px;top:325px;width:23px;height:23px;background:#80ff80"></div>
<div class="a" style="left:435px;top:325px;width:23px;height:23px;background:#00ff00"></div>
<div class="a" style="left:459px;top:325px;width:23px;height:23px;background:#00ff80"></div>
<div class="a" style="left:485px;top:205px;width:20px;height:143px;background:#3d3d3d;border:1px solid #505050"></div>
<div class="a" style="left:485px;top:205px;width:20px;height:20px;background:#444;border:1px solid #555"></div>
<div class="a" style="left:485px;top:328px;width:20px;height:20px;background:#444;border:1px solid #555"></div>
<div class="a" style="left:486px;top:226px;width:18px;height:101px;background:#404040;border:1px solid #4c4c4c"></div>
<svg style="left:489px;top:211px" width="12" height="7" viewBox="0 0 12 7"><path d="M0 7 H12 L6 0 Z" fill="#8e8e8e"/></svg>
<svg style="left:489px;top:335px" width="12" height="7" viewBox="0 0 12 7"><path d="M0 0 H12 L6.0 7 Z" fill="#8e8e8e"/></svg>
<div class="a" style="left:2px;top:351px;width:503px;height:30px;background:#383838;border:1px solid #505050;border-radius:3px"></div>
<div class="a" style="left:474px;top:352px;width:30px;height:28px;background:#404040"></div>
<div class="a" style="left:5px;top:354px;width:24px;height:24px;background:#ffc18e"></div>
<div class="t" style="left:30px;top:358px;font-size:17px;color:#dcdcdc;">Apricot</div>
<svg style="left:483px;top:363px" width="13" height="7" viewBox="0 0 13 7"><path d="M0 0 H13 L6.5 7 Z" fill="#8e8e8e"/></svg>
<div class="t" style="left:2px;top:387px;font-size:16px;color:#dcdcdc;">Default</div>
<svg style="left:5px;top:408px" width="24" height="24" viewBox="0 0 24 24"><rect x="0" y="0" width="24" height="24" fill="#e8e8e8"/><rect x="1" y="1" width="7" height="7" fill="#1e5cc8"/><rect x="9" y="1" width="7" height="7" fill="#2aa0d0"/><rect x="17" y="1" width="7" height="7" fill="#20c0b0"/><rect x="1" y="9" width="7" height="7" fill="#d01818"/><rect x="9" y="9" width="7" height="7" fill="#c0146a"/><rect x="17" y="9" width="7" height="7" fill="#a020c0"/><rect x="1" y="17" width="7" height="7" fill="#c88010"/><rect x="9" y="17" width="7" height="7" fill="#98c020"/><rect x="17" y="17" width="7" height="7" fill="#60c060"/></svg>
<svg style="left:361px;top:413px" width="14" height="14" viewBox="0 0 24 24"><path d="M12 2 V22 M2 12 H22" stroke="#d2d2d2" stroke-width="2.6"/></svg>
<svg style="left:385px;top:412px" width="16" height="16" viewBox="0 0 24 24"><path d="M4 20 L5 15 L16 4 L20 8 L9 19 Z M14 6 L18 10" stroke="#d2d2d2" stroke-width="2" fill="none"/><path d="M4 20 L5 15 L9 19 Z" fill="#d2d2d2"/></svg>
<svg style="left:410px;top:412px" width="15" height="15" viewBox="0 0 24 24"><path d="M3 3 H18 L21 6 V21 H3 Z M7 3 V9 H16 V3 M13 4 V8 M6 21 V14 H18 V21" stroke="#d2d2d2" fill="none" stroke-width="2" stroke-linejoin="miter"/></svg>
<svg style="left:435px;top:412px" width="16" height="16" viewBox="0 0 24 24"><path d="M2 2 H22 V22 H2 Z M2 9 H22 M2 15 H22 M9 2 V22 M15 2 V22" stroke="#d2d2d2" stroke-width="1.8" fill="none"/></svg>
<svg style="left:460px;top:412px" width="15" height="15" viewBox="0 0 24 24"><path d="M3 6 H21 V8 H3 Z M9 3 H15 V6 H9 Z" fill="#d2d2d2"/><path d="M5 9 H19 L18 22 H6 Z" fill="#d2d2d2"/></svg>
<div class="a" style="left:482px;top:407px;width:23px;height:27px;background:#424242;border:1px solid #555;border-radius:3px"></div>
<div class="t" style="left:487px;top:413px;font-size:14px;color:#dcdcdc;">...</div>
<div class="a" style="left:247px;top:441px;width:17px;height:2px;background:repeating-linear-gradient(90deg,#8a8a8a 0 1px,transparent 1px 3px)"></div>
<div class="a" style="left:1px;top:447px;width:80px;height:37px;background:#4a4a4a;border:1px solid #575757;border-bottom:none;border-radius:3px 3px 0 0"></div><div class="t" style="left:18px;top:458px;font-size:16px;color:#dcdcdc;">Layers</div>
<div class="a" style="left:83px;top:449px;width:129px;height:35px;background:#414141;border:1px solid #575757;border-bottom:none;border-radius:3px 3px 0 0"></div><div class="t" style="left:99px;top:459px;font-size:16px;color:#dcdcdc;">Compositions</div>
<div class="a" style="left:0;top:483px;width:507px;height:1px;background:#5a5a5a"></div>
<svg style="left:2px;top:489px" width="17" height="17" viewBox="0 0 24 24"><circle cx="12" cy="12" r="10" stroke="#d2d2d2" stroke-width="1.6" fill="none"/><path d="M8.5 10 V8 C8.5 4.5 15.5 4.5 15.5 8" stroke="#d2d2d2" stroke-width="1.8" fill="none"/><rect x="7" y="11" width="10" height="6" fill="#d2d2d2"/></svg><div class="t" style="left:24px;top:491px;font-size:16px;color:#dcdcdc;">Layers</div><svg style="left:468px;top:490px" width="15" height="15" viewBox="0 0 24 24"><path d="M2 10 H13 V22 H2 Z M8 4 H22 V15 H13 M8 10 V4" stroke="#d2d2d2" stroke-width="2" fill="none"/><path d="M8 5 H22" stroke="#d2d2d2" stroke-width="3"/><path d="M2 11 H13" stroke="#d2d2d2" stroke-width="3"/></svg><svg style="left:491px;top:491px" width="12" height="12" viewBox="0 0 24 24"><path d="M3 3 L21 21 M21 3 L3 21" stroke="#d2d2d2" stroke-width="2.2"/></svg>
<div class="a" style="left:2px;top:508px;width:470px;height:30px;background:#3e3e3e;border:1px solid #555;border-radius:3px"></div>
<div class="t" style="left:6px;top:515px;font-size:17px;color:#dcdcdc;">Normal</div>
<svg style="left:450px;top:520px" width="13" height="7" viewBox="0 0 13 7"><path d="M0 0 H13 L6.5 7 Z" fill="#8e8e8e"/></svg>
<svg style="left:481px;top:514px" width="22" height="22" viewBox="0 0 24 24"><path d="M2 2 H20 L13 11 V21 L9 18 V11 Z" stroke="#d2d2d2" stroke-width="1.8" fill="none"/><path d="M14 17 H22 L18 21 Z" fill="#8a8a8a"/></svg>
<div class="a" style="left:2px;top:542px;width:470px;height:30px;background:#363636;border:1px solid #555;border-radius:3px;overflow:hidden"><div class="a" style="left:0;top:0;width:449px;height:28px;background:#52708f"></div></div>
<div class="t" style="left:174px;top:549px;font-size:17px;color:#ececec;">Opacity:&nbsp; 100%</div>
<svg style="left:453px;top:546px" width="14" height="22" viewBox="0 0 14 22"><path d="M2 8 L7 3 L12 8 Z M2 14 L7 19 L12 14 Z" fill="#6c8aa8"/></svg>
<svg style="left:482px;top:549px" width="22" height="22" viewBox="0 0 24 24"><path d="M2 4 H18 M2 9 H18 M2 14 H18" stroke="#d2d2d2" stroke-width="2.2"/><path d="M13 16 H23 L18 21 Z" fill="#8a8a8a"/></svg>
<div class="a" style="left:1px;top:573px;width:506px;height:919px;background:#363636;border:1px solid #3a3a3a"></div>
<svg style="left:5px;top:578px" width="16" height="16" viewBox="0 0 24 24"><ellipse cx="12" cy="13" rx="9.5" ry="7.5" stroke="#6a6a6a" stroke-width="1.3" fill="none"/><path d="M3 15 C7 21 17 21 21 15" stroke="#808080" stroke-width="1.6" fill="none"/></svg>
<div class="a" style="left:28px;top:579px;width:14px;height:15px;background:#2b2b2b"></div>
<div class="a" style="left:50px;top:582px;width:20px;height:12px;background:repeating-conic-gradient(#6a6a6a 0 25%,#5a5a5a 0 50%) 0 0/4px 4px"></div>
<svg style="left:76px;top:575px" width="13" height="13" viewBox="0 0 13 13"><path d="M5 1 H12 V8 L9 11 H5 V6" stroke="#d2d2d2" stroke-width="1.3" fill="none"/><path d="M1 2 L8 9" stroke="#d2d2d2" stroke-width="1.3"/></svg>
<div class="t" style="left:90px;top:583px;font-size:16px;color:#8c8c8c;">Paint Layer 2</div>
<svg style="left:451px;top:580px" width="13" height="13" viewBox="0 0 24 24"><path d="M7 11 V7 C7 2 17 2 17 7 V11" stroke="#7a7a7a" stroke-width="2.6" fill="none"/><rect x="4" y="11" width="16" height="11" fill="#7a7a7a"/></svg>
<svg style="left:467px;top:577px" width="18" height="18" viewBox="0 0 24 24"><text x="12" y="20" font-family="Liberation Sans" font-style="italic" font-size="24" text-anchor="middle" fill="#7a7a7a">α</text></svg>
<div class="a" style="left:487px;top:580px;width:15px;height:15px;background:repeating-conic-gradient(#6e6e6e 0 25%,#555555 0 50%) 0 0/10px 10px;opacity:1"></div>
<div class="a" style="left:2px;top:601px;width:504px;height:1px;background:#3d3d3d"></div>
<div class="a" style="left:46px;top:601px;width:459px;height:27px;background:#52708f"></div>
<svg style="left:5px;top:605px" width="16" height="16" viewBox="0 0 24 24"><path d="M2 12 C6 5 18 5 22 12" stroke="#d2d2d2" stroke-width="1.6" fill="none"/><path d="M3 16 C7 21 17 21 21 16" stroke="#d2d2d2" stroke-width="1.4" fill="none"/><circle cx="12" cy="11" r="4.5" fill="#d2d2d2"/></svg>
<div class="a" style="left:28px;top:606px;width:14px;height:15px;background:#2b2b2b"></div>
<svg style="left:29px;top:607px" width="12" height="12" viewBox="0 0 12 12"><path d="M2 6 L5 10 L10 2" stroke="#d8d8d8" stroke-width="2.2" fill="none"/></svg>
<div class="a" style="left:50px;top:605px;width:20px;height:20px;border:1px solid #222;background:repeating-conic-gradient(#ffffff 0 25%,#e4e4e4 0 50%) 0 0/6px 6px"></div>
<svg style="left:76px;top:602px" width="13" height="13" viewBox="0 0 13 13"><path d="M5 1 H12 V8 L9 11 H5 V6" stroke="#d2d2d2" stroke-width="1.3" fill="none"/><path d="M1 2 L8 9" stroke="#d2d2d2" stroke-width="1.3"/></svg>
<svg style="left:75px;top:615px" width="14" height="11" viewBox="0 0 14 11"><rect x="1" y="1" width="12" height="9" stroke="#d2d2d2" stroke-width="1.6" fill="none"/><path d="M5 3 L9.5 5.5 L5 8 Z" fill="#d2d2d2"/></svg>
<div class="t" style="left:90px;top:610px;font-size:16px;color:#e4e4e4;font-weight:bold;">keyframes</div>
<svg style="left:429px;top:606px" width="15" height="15" viewBox="0 0 24 24"><path d="M12 5 C7 5 6 9 7 12 C8 14 9 15 9 17 H15 C15 15 16 14 17 12 C18 9 17 5 12 5 Z" fill="#d2d2d2"/><rect x="9.5" y="18" width="5" height="3" fill="#d2d2d2"/><path d="M12 1 V3 M3 10 H1 M23 10 H21 M5 4 L4 3 M19 4 L20 3" stroke="#d2d2d2" stroke-width="1.6"/></svg>
<svg style="left:451px;top:607px" width="13" height="13" viewBox="0 0 24 24"><path d="M7 11 V8 C7 3 16 3 17 7" stroke="#7f97ae" stroke-width="2.6" fill="none"/><rect x="4" y="11" width="16" height="11" fill="#7f97ae"/></svg>
<svg style="left:467px;top:604px" width="18" height="18" viewBox="0 0 24 24"><text x="12" y="20" font-family="Liberation Sans" font-style="italic" font-size="24" text-anchor="middle" fill="#8aa0b6">α</text></svg>
<div class="a" style="left:487px;top:607px;width:15px;height:15px;background:repeating-conic-gradient(#6e6e6e 0 25%,#555555 0 50%) 0 0/10px 10px;opacity:0.6"></div>
<div class="a" style="left:2px;top:628px;width:504px;height:1px;background:#3d3d3d"></div>
<svg style="left:5px;top:632px" width="16" height="16" viewBox="0 0 24 24"><path d="M2 12 C6 5 18 5 22 12" stroke="#d2d2d2" stroke-width="1.6" fill="none"/><path d="M3 16 C7 21 17 21 21 16" stroke="#d2d2d2" stroke-width="1.4" fill="none"/><circle cx="12" cy="11" r="4.5" fill="#d2d2d2"/></svg>
<div class="a" style="left:28px;top:633px;width:14px;height:15px;background:#2b2b2b"></div>
<div class="a" style="left:50px;top:632px;width:20px;height:20px;background:repeating-conic-gradient(#ffffff 0 25%,#e4e4e4 0 50%) 0 0/6px 6px"></div>
<svg style="left:76px;top:629px" width="13" height="13" viewBox="0 0 13 13"><path d="M5 1 H12 V8 L9 11 H5 V6" stroke="#d2d2d2" stroke-width="1.3" fill="none"/><path d="M1 2 L8 9" stroke="#d2d2d2" stroke-width="1.3"/></svg>
<svg style="left:75px;top:642px" width="14" height="11" viewBox="0 0 14 11"><rect x="1" y="1" width="12" height="9" stroke="#d2d2d2" stroke-width="1.6" fill="none"/><path d="M5 3 L9.5 5.5 L5 8 Z" fill="#d2d2d2"/></svg>
<div class="t" style="left:90px;top:637px;font-size:16px;color:#dcdcdc;">timingAdditions</div>
<svg style="left:429px;top:633px" width="15" height="15" viewBox="0 0 24 24"><path d="M12 5 C7 5 6 9 7 12 C8 14 9 15 9 17 H15 C15 15 16 14 17 12 C18 9 17 5 12 5 Z" fill="#d2d2d2"/><rect x="9.5" y="18" width="5" height="3" fill="#d2d2d2"/><path d="M12 1 V3 M3 10 H1 M23 10 H21 M5 4 L4 3 M19 4 L20 3" stroke="#d2d2d2" stroke-width="1.6"/></svg>
<svg style="left:451px;top:634px" width="13" height="13" viewBox="0 0 24 24"><path d="M7 11 V7 C7 2 17 2 17 7 V11" stroke="#d2d2d2" stroke-width="2.6" fill="none"/><rect x="4" y="11" width="16" height="11" fill="#d2d2d2"/></svg>
<svg style="left:467px;top:631px" width="18" height="18" viewBox="0 0 24 24"><text x="12" y="20" font-family="Liberation Sans" font-style="italic" font-size="24" text-anchor="middle" fill="#7a7a7a">α</text></svg>
<div class="a" style="left:487px;top:634px;width:15px;height:15px;background:repeating-conic-gradient(#6e6e6e 0 25%,#555555 0 50%) 0 0/10px 10px;opacity:1"></div>
<div class="a" style="left:2px;top:655px;width:504px;height:1px;background:#3d3d3d"></div>
<svg style="left:5px;top:659px" width="16" height="16" viewBox="0 0 24 24"><path d="M2 12 C6 5 18 5 22 12" stroke="#d2d2d2" stroke-width="1.6" fill="none"/><path d="M3 16 C7 21 17 21 21 16" stroke="#d2d2d2" stroke-width="1.4" fill="none"/><circle cx="12" cy="11" r="4.5" fill="#d2d2d2"/></svg>
<div class="a" style="left:28px;top:660px;width:14px;height:15px;background:#2b2b2b"></div>
<div class="a" style="left:50px;top:659px;width:20px;height:20px;background:repeating-conic-gradient(#ffffff 0 25%,#e4e4e4 0 50%) 0 0/6px 6px"></div>
<svg style="left:76px;top:656px" width="13" height="13" viewBox="0 0 13 13"><path d="M5 1 H12 V8 L9 11 H5 V6" stroke="#d2d2d2" stroke-width="1.3" fill="none"/><path d="M1 2 L8 9" stroke="#d2d2d2" stroke-width="1.3"/></svg>
<svg style="left:75px;top:669px" width="14" height="11" viewBox="0 0 14 11"><rect x="1" y="1" width="12" height="9" stroke="#d2d2d2" stroke-width="1.6" fill="none"/><path d="M5 3 L9.5 5.5 L5 8 Z" fill="#d2d2d2"/></svg>
<div class="t" style="left:90px;top:664px;font-size:16px;color:#dcdcdc;">timingCharts</div>
<svg style="left:429px;top:660px" width="15" height="15" viewBox="0 0 24 24"><path d="M12 5 C8 5 7 9 8 12 C9 14 10 15 10 17 H14 C14 15 15 14 16 12 C17 9 16 5 12 5 Z" fill="#6f6f6f"/><rect x="10.5" y="18" width="3" height="3" fill="#6f6f6f"/></svg>
<svg style="left:451px;top:661px" width="13" height="13" viewBox="0 0 24 24"><path d="M7 11 V7 C7 2 17 2 17 7 V11" stroke="#d2d2d2" stroke-width="2.6" fill="none"/><rect x="4" y="11" width="16" height="11" fill="#d2d2d2"/></svg>
<svg style="left:467px;top:658px" width="18" height="18" viewBox="0 0 24 24"><text x="12" y="20" font-family="Liberation Sans" font-style="italic" font-size="24" text-anchor="middle" fill="#7a7a7a">α</text></svg>
<div class="a" style="left:487px;top:661px;width:15px;height:15px;background:repeating-conic-gradient(#6e6e6e 0 25%,#555555 0 50%) 0 0/10px 10px;opacity:1"></div>
<div class="a" style="left:2px;top:682px;width:504px;height:1px;background:#3d3d3d"></div>
<svg style="left:5px;top:686px" width="16" height="16" viewBox="0 0 24 24"><path d="M2 12 C6 5 18 5 22 12" stroke="#d2d2d2" stroke-width="1.6" fill="none"/><path d="M3 16 C7 21 17 21 21 16" stroke="#d2d2d2" stroke-width="1.4" fill="none"/><circle cx="12" cy="11" r="4.5" fill="#d2d2d2"/></svg>
<div class="a" style="left:28px;top:687px;width:14px;height:15px;background:#2b2b2b"></div>
<div class="a" style="left:50px;top:691px;width:20px;height:11px;background:#e8e8e8;border:1px solid #222"></div>
<div class="a" style="left:53px;top:694px;width:10px;height:5px;background:#555"></div>
<svg style="left:76px;top:683px" width="13" height="13" viewBox="0 0 13 13"><path d="M5 1 H12 V8 L9 11 H5 V6" stroke="#d2d2d2" stroke-width="1.3" fill="none"/><path d="M1 2 L8 9" stroke="#d2d2d2" stroke-width="1.3"/></svg>
<svg style="left:75px;top:696px" width="14" height="11" viewBox="0 0 14 11"><rect x="1" y="1" width="12" height="9" stroke="#d2d2d2" stroke-width="1.6" fill="none"/><path d="M5 3 L9.5 5.5 L5 8 Z" fill="#d2d2d2"/></svg>
<div class="t" style="left:90px;top:691px;font-size:16px;color:#dcdcdc;">originalVideo</div>
<svg style="left:429px;top:687px" width="15" height="15" viewBox="0 0 24 24"><path d="M12 5 C8 5 7 9 8 12 C9 14 10 15 10 17 H14 C14 15 15 14 16 12 C17 9 16 5 12 5 Z" fill="#6f6f6f"/><rect x="10.5" y="18" width="3" height="3" fill="#6f6f6f"/></svg>
<svg style="left:451px;top:688px" width="13" height="13" viewBox="0 0 24 24"><path d="M7 11 V7 C7 2 17 2 17 7 V11" stroke="#d2d2d2" stroke-width="2.6" fill="none"/><rect x="4" y="11" width="16" height="11" fill="#d2d2d2"/></svg>
<svg style="left:467px;top:685px" width="18" height="18" viewBox="0 0 24 24"><text x="12" y="20" font-family="Liberation Sans" font-style="italic" font-size="24" text-anchor="middle" fill="#7a7a7a">α</text></svg>
<div class="a" style="left:487px;top:688px;width:15px;height:15px;background:repeating-conic-gradient(#6e6e6e 0 25%,#555555 0 50%) 0 0/10px 10px;opacity:1"></div>
<div class="a" style="left:2px;top:709px;width:504px;height:1px;background:#3d3d3d"></div>
<svg style="left:5px;top:713px" width="16" height="16" viewBox="0 0 24 24"><path d="M2 12 C6 5 18 5 22 12" stroke="#d2d2d2" stroke-width="1.6" fill="none"/><path d="M3 16 C7 21 17 21 21 16" stroke="#d2d2d2" stroke-width="1.4" fill="none"/><circle cx="12" cy="11" r="4.5" fill="#d2d2d2"/></svg>
<div class="a" style="left:28px;top:714px;width:14px;height:15px;background:#2b2b2b"></div>
<div class="a" style="left:50px;top:718px;width:20px;height:11px;background:#ffffff"></div>
<svg style="left:76px;top:710px" width="13" height="13" viewBox="0 0 13 13"><path d="M5 1 H12 V8 L9 11 H5 V6" stroke="#d2d2d2" stroke-width="1.3" fill="none"/><path d="M1 2 L8 9" stroke="#d2d2d2" stroke-width="1.3"/></svg>
<div class="t" style="left:90px;top:718px;font-size:16px;color:#dcdcdc;">Background</div>
<svg style="left:451px;top:715px" width="13" height="13" viewBox="0 0 24 24"><path d="M7 11 V7 C7 2 17 2 17 7 V11" stroke="#d2d2d2" stroke-width="2.6" fill="none"/><rect x="4" y="11" width="16" height="11" fill="#d2d2d2"/></svg>
<svg style="left:467px;top:712px" width="18" height="18" viewBox="0 0 24 24"><text x="12" y="20" font-family="Liberation Sans" font-style="italic" font-size="24" text-anchor="middle" fill="#7a7a7a">α</text></svg>
<div class="a" style="left:487px;top:715px;width:15px;height:15px;background:repeating-conic-gradient(#6e6e6e 0 25%,#555555 0 50%) 0 0/10px 10px;opacity:1"></div>
<svg style="left:7px;top:1498px" width="18" height="18" viewBox="0 0 24 24"><path d="M12 2 V22 M2 12 H22" stroke="#d2d2d2" stroke-width="2.6"/></svg>
<svg style="left:33px;top:1505px" width="12" height="7" viewBox="0 0 12 7"><path d="M0 0 H12 L6.0 7 Z" fill="#8a8a8a"/></svg>
<svg style="left:55px;top:1496px" width="21" height="21" viewBox="0 0 24 24"><path d="M7 2 H22 V17 H7 Z" stroke="#d2d2d2" stroke-width="2.2" fill="none"/><path d="M3 6 V21 H18" stroke="#d2d2d2" stroke-width="2.2" fill="none"/></svg>
<svg style="left:87px;top:1497px" width="21" height="21" viewBox="0 0 24 24"><path d="M3 7 L12 16 L21 7" stroke="#d2d2d2" stroke-width="2.4" fill="none"/></svg>
<svg style="left:119px;top:1495px" width="21" height="21" viewBox="0 0 24 24"><path d="M3 17 L12 8 L21 17" stroke="#d2d2d2" stroke-width="2.4" fill="none"/></svg>
<svg style="left:151px;top:1497px" width="21" height="21" viewBox="0 0 24 24"><path d="M2 5 H22 M2 12 H22 M2 19 H22" stroke="#d2d2d2" stroke-width="2"/><rect x="14" y="2" width="3" height="6" fill="#d2d2d2"/><rect x="6" y="9" width="3" height="6" fill="#d2d2d2"/><rect x="12" y="16" width="3" height="6" fill="#d2d2d2"/></svg>
<svg style="left:180px;top:1505px" width="12" height="7" viewBox="0 0 12 7"><path d="M0 0 H12 L6.0 7 Z" fill="#8a8a8a"/></svg>
<svg style="left:480px;top:1496px" width="20" height="20" viewBox="0 0 24 24"><path d="M3 6 H21 V8 H3 Z M9 3 H15 V6 H9 Z" fill="#d2d2d2"/><path d="M5 9 H19 L18 22 H6 Z" fill="#d2d2d2"/></svg>
<div class="a" style="left:511px;top:825px;width:2px;height:16px;background:repeating-linear-gradient(180deg,#8a8a8a 0 1px,transparent 1px 3px)"></div>
<svg style="left:1000px;top:191px;overflow:hidden" width="2334" height="1310" viewBox="1000 191 2334 1310">
<defs>
<filter id="bl" x="-5%" y="-5%" width="110%" height="110%"><feGaussianBlur stdDeviation="12"/></filter>
<filter id="bl3" x="-20%" y="-20%" width="140%" height="140%"><feGaussianBlur stdDeviation="4"/></filter>
<linearGradient id="cg" x1="0" y1="0" x2="0" y2="1"><stop offset="0" stop-color="#c9c9c9"/><stop offset="0.45" stop-color="#cdcdcd"/><stop offset="1" stop-color="#d1d1d1"/></linearGradient>
</defs>
<rect x="1000" y="191" width="2334" height="1310" fill="#e3e3e3"/>
<defs><linearGradient id="eL" x1="0" x2="1"><stop offset="0" stop-color="#fbfbfb"/><stop offset="0.3" stop-color="#f0f0f0"/><stop offset="1" stop-color="#e5e5e5" stop-opacity="0"/></linearGradient><linearGradient id="eR" x1="1" x2="0"><stop offset="0" stop-color="#f8f8f8"/><stop offset="0.3" stop-color="#eeeeee"/><stop offset="1" stop-color="#e5e5e5" stop-opacity="0"/></linearGradient><linearGradient id="eT" x1="0" y1="0" x2="0" y2="1"><stop offset="0" stop-color="#f6f6f6"/><stop offset="0.4" stop-color="#ededed"/><stop offset="1" stop-color="#e5e5e5" stop-opacity="0"/></linearGradient><linearGradient id="eB" x1="0" y1="1" x2="0" y2="0"><stop offset="0" stop-color="#f6f6f6"/><stop offset="0.4" stop-color="#ededed"/><stop offset="1" stop-color="#e5e5e5" stop-opacity="0"/></linearGradient></defs>
<rect x="1000" y="191" width="45" height="1310" fill="url(#eL)"/>
<rect x="3290" y="191" width="44" height="1310" fill="url(#eR)"/>
<rect x="1000" y="191" width="2334" height="40" fill="url(#eT)"/>
<rect x="1000" y="1465" width="2334" height="36" fill="url(#eB)"/>
<g filter="url(#bl3)"><ellipse cx="2383" cy="195" rx="37" ry="8" fill="#f8f8f8" opacity="0.8"/><ellipse cx="1153" cy="1470" rx="35" ry="6" fill="#f8f8f8" opacity="0.8"/><ellipse cx="1448" cy="215" rx="25" ry="8" fill="#f8f8f8" opacity="0.8"/><ellipse cx="3320" cy="388" rx="28" ry="11" fill="#f8f8f8" opacity="0.8"/><ellipse cx="1910" cy="1470" rx="33" ry="5" fill="#f8f8f8" opacity="0.8"/><ellipse cx="1100" cy="1494" rx="34" ry="6" fill="#f8f8f8" opacity="0.8"/><ellipse cx="2678" cy="1497" rx="31" ry="11" fill="#f8f8f8" opacity="0.8"/><ellipse cx="3323" cy="947" rx="39" ry="5" fill="#f8f8f8" opacity="0.8"/><ellipse cx="1004" cy="369" rx="15" ry="12" fill="#f8f8f8" opacity="0.8"/><ellipse cx="3325" cy="1311" rx="21" ry="11" fill="#f8f8f8" opacity="0.8"/><ellipse cx="1819" cy="1488" rx="27" ry="11" fill="#f8f8f8" opacity="0.8"/><ellipse cx="2999" cy="225" rx="29" ry="5" fill="#f8f8f8" opacity="0.8"/><ellipse cx="1039" cy="1376" rx="26" ry="10" fill="#f8f8f8" opacity="0.8"/><ellipse cx="2477" cy="225" rx="17" ry="5" fill="#f8f8f8" opacity="0.8"/><ellipse cx="3328" cy="1488" rx="11" ry="10" fill="#f8f8f8" opacity="0.8"/><ellipse cx="3330" cy="217" rx="22" ry="7" fill="#f8f8f8" opacity="0.8"/><ellipse cx="1103" cy="212" rx="9" ry="10" fill="#f8f8f8" opacity="0.8"/><ellipse cx="1022" cy="1399" rx="17" ry="6" fill="#f8f8f8" opacity="0.8"/><ellipse cx="1723" cy="194" rx="27" ry="4" fill="#f8f8f8" opacity="0.8"/><ellipse cx="3267" cy="201" rx="16" ry="10" fill="#f8f8f8" opacity="0.8"/><ellipse cx="1013" cy="1447" rx="37" ry="7" fill="#f8f8f8" opacity="0.8"/><ellipse cx="3329" cy="697" rx="36" ry="9" fill="#f8f8f8" opacity="0.8"/><ellipse cx="2447" cy="223" rx="24" ry="7" fill="#f8f8f8" opacity="0.8"/><ellipse cx="3186" cy="206" rx="16" ry="6" fill="#f8f8f8" opacity="0.8"/><ellipse cx="1000" cy="735" rx="27" ry="4" fill="#f8f8f8" opacity="0.8"/><ellipse cx="2375" cy="1474" rx="28" ry="7" fill="#f8f8f8" opacity="0.8"/><ellipse cx="1027" cy="653" rx="31" ry="10" fill="#f8f8f8" opacity="0.8"/><ellipse cx="2376" cy="223" rx="9" ry="7" fill="#f8f8f8" opacity="0.8"/><ellipse cx="3307" cy="979" rx="14" ry="5" fill="#f8f8f8" opacity="0.8"/><ellipse cx="1034" cy="537" rx="33" ry="5" fill="#f8f8f8" opacity="0.8"/><ellipse cx="3267" cy="214" rx="12" ry="8" fill="#f8f8f8" opacity="0.8"/><ellipse cx="1010" cy="436" rx="22" ry="10" fill="#f8f8f8" opacity="0.8"/><ellipse cx="2402" cy="223" rx="30" ry="6" fill="#f8f8f8" opacity="0.8"/><ellipse cx="1187" cy="216" rx="15" ry="9" fill="#f8f8f8" opacity="0.8"/><ellipse cx="1009" cy="349" rx="25" ry="6" fill="#f8f8f8" opacity="0.8"/><ellipse cx="1428" cy="1479" rx="34" ry="9" fill="#f8f8f8" opacity="0.8"/><ellipse cx="1806" cy="1474" rx="17" ry="10" fill="#f8f8f8" opacity="0.8"/><ellipse cx="1019" cy="1022" rx="17" ry="9" fill="#f8f8f8" opacity="0.8"/><ellipse cx="3149" cy="196" rx="8" ry="12" fill="#f8f8f8" opacity="0.8"/><ellipse cx="3303" cy="1483" rx="38" ry="11" fill="#f8f8f8" opacity="0.8"/><ellipse cx="1075" cy="207" rx="32" ry="10" fill="#f8f8f8" opacity="0.8"/><ellipse cx="1022" cy="1357" rx="36" ry="11" fill="#f8f8f8" opacity="0.8"/><ellipse cx="1005" cy="511" rx="9" ry="10" fill="#f8f8f8" opacity="0.8"/><ellipse cx="3156" cy="1498" rx="37" ry="9" fill="#f8f8f8" opacity="0.8"/><ellipse cx="2123" cy="195" rx="24" ry="6" fill="#f8f8f8" opacity="0.8"/><ellipse cx="2225" cy="205" rx="38" ry="9" fill="#f8f8f8" opacity="0.8"/><ellipse cx="1005" cy="1464" rx="25" ry="10" fill="#f8f8f8" opacity="0.8"/><ellipse cx="1821" cy="198" rx="25" ry="11" fill="#f8f8f8" opacity="0.8"/><ellipse cx="1559" cy="200" rx="36" ry="5" fill="#f8f8f8" opacity="0.8"/><ellipse cx="2138" cy="210" rx="21" ry="10" fill="#f8f8f8" opacity="0.8"/><ellipse cx="1627" cy="209" rx="22" ry="8" fill="#f8f8f8" opacity="0.8"/><ellipse cx="3000" cy="217" rx="9" ry="4" fill="#f8f8f8" opacity="0.8"/><ellipse cx="3333" cy="1310" rx="11" ry="8" fill="#f8f8f8" opacity="0.8"/><ellipse cx="1006" cy="285" rx="20" ry="7" fill="#f8f8f8" opacity="0.8"/><ellipse cx="1014" cy="441" rx="19" ry="5" fill="#f8f8f8" opacity="0.8"/><ellipse cx="1008" cy="1492" rx="33" ry="9" fill="#f8f8f8" opacity="0.8"/><ellipse cx="1871" cy="212" rx="33" ry="7" fill="#f8f8f8" opacity="0.8"/><ellipse cx="2454" cy="206" rx="20" ry="8" fill="#f8f8f8" opacity="0.8"/><ellipse cx="1017" cy="1100" rx="23" ry="6" fill="#f8f8f8" opacity="0.8"/><ellipse cx="1630" cy="1488" rx="34" ry="6" fill="#f8f8f8" opacity="0.8"/><ellipse cx="3053" cy="223" rx="20" ry="11" fill="#f8f8f8" opacity="0.8"/><ellipse cx="1005" cy="1096" rx="38" ry="10" fill="#f8f8f8" opacity="0.8"/><ellipse cx="2850" cy="1491" rx="31" ry="9" fill="#f8f8f8" opacity="0.8"/><ellipse cx="2894" cy="215" rx="23" ry="6" fill="#f8f8f8" opacity="0.8"/><ellipse cx="3297" cy="311" rx="11" ry="11" fill="#f8f8f8" opacity="0.8"/><ellipse cx="2913" cy="203" rx="35" ry="4" fill="#f8f8f8" opacity="0.8"/><ellipse cx="2572" cy="219" rx="38" ry="9" fill="#f8f8f8" opacity="0.8"/><ellipse cx="1085" cy="217" rx="24" ry="10" fill="#f8f8f8" opacity="0.8"/><ellipse cx="2294" cy="194" rx="26" ry="8" fill="#f8f8f8" opacity="0.8"/><ellipse cx="1421" cy="1472" rx="40" ry="9" fill="#f8f8f8" opacity="0.8"/></g>
<rect x="1525" y="367" width="1230" height="1004" fill="url(#cg)"/>
<rect x="1525" y="1371" width="1230" height="82" fill="#dfdfdf"/>
<rect x="1525" y="261" width="1230" height="106" fill="#e5e5e5"/>
<g filter="url(#bl3)"><ellipse cx="2083" cy="357" rx="42" ry="3" fill="#f4f4f4" opacity="0.9"/><ellipse cx="2149" cy="357" rx="16" ry="4" fill="#f4f4f4" opacity="0.9"/><ellipse cx="2296" cy="360" rx="13" ry="3" fill="#f4f4f4" opacity="0.9"/><ellipse cx="1649" cy="360" rx="34" ry="2" fill="#f4f4f4" opacity="0.9"/><ellipse cx="2719" cy="362" rx="33" ry="4" fill="#f4f4f4" opacity="0.9"/><ellipse cx="1729" cy="350" rx="28" ry="2" fill="#f4f4f4" opacity="0.9"/><ellipse cx="1768" cy="353" rx="11" ry="3" fill="#f4f4f4" opacity="0.9"/><ellipse cx="2069" cy="360" rx="28" ry="4" fill="#f4f4f4" opacity="0.9"/><ellipse cx="2140" cy="358" rx="26" ry="3" fill="#f4f4f4" opacity="0.9"/><ellipse cx="2737" cy="362" rx="39" ry="4" fill="#f4f4f4" opacity="0.9"/><ellipse cx="1918" cy="353" rx="20" ry="2" fill="#f4f4f4" opacity="0.9"/><ellipse cx="2460" cy="355" rx="40" ry="3" fill="#f4f4f4" opacity="0.9"/><ellipse cx="2690" cy="360" rx="10" ry="3" fill="#f4f4f4" opacity="0.9"/><ellipse cx="2632" cy="356" rx="44" ry="3" fill="#f4f4f4" opacity="0.9"/><ellipse cx="1628" cy="358" rx="37" ry="3" fill="#f4f4f4" opacity="0.9"/><ellipse cx="1645" cy="354" rx="44" ry="4" fill="#f4f4f4" opacity="0.9"/><ellipse cx="1682" cy="353" rx="14" ry="2" fill="#f4f4f4" opacity="0.9"/><ellipse cx="2496" cy="352" rx="30" ry="3" fill="#f4f4f4" opacity="0.9"/><ellipse cx="1769" cy="359" rx="15" ry="4" fill="#f4f4f4" opacity="0.9"/><ellipse cx="1680" cy="355" rx="17" ry="3" fill="#f4f4f4" opacity="0.9"/><ellipse cx="2705" cy="360" rx="21" ry="5" fill="#f4f4f4" opacity="0.9"/><ellipse cx="1793" cy="355" rx="40" ry="4" fill="#f4f4f4" opacity="0.9"/><ellipse cx="1660" cy="362" rx="17" ry="3" fill="#f4f4f4" opacity="0.9"/><ellipse cx="2467" cy="354" rx="20" ry="2" fill="#f4f4f4" opacity="0.9"/><ellipse cx="1648" cy="357" rx="19" ry="4" fill="#f4f4f4" opacity="0.9"/><ellipse cx="1986" cy="355" rx="44" ry="3" fill="#f4f4f4" opacity="0.9"/><ellipse cx="2229" cy="360" rx="16" ry="2" fill="#f4f4f4" opacity="0.9"/><ellipse cx="2630" cy="360" rx="19" ry="3" fill="#f4f4f4" opacity="0.9"/><ellipse cx="2427" cy="361" rx="17" ry="5" fill="#f4f4f4" opacity="0.9"/><ellipse cx="2599" cy="357" rx="25" ry="2" fill="#f4f4f4" opacity="0.9"/><ellipse cx="1586" cy="362" rx="18" ry="4" fill="#f4f4f4" opacity="0.9"/><ellipse cx="1848" cy="360" rx="31" ry="3" fill="#f4f4f4" opacity="0.9"/><ellipse cx="1751" cy="359" rx="12" ry="3" fill="#f4f4f4" opacity="0.9"/><ellipse cx="2211" cy="360" rx="32" ry="3" fill="#f4f4f4" opacity="0.9"/><ellipse cx="2641" cy="352" rx="11" ry="3" fill="#f4f4f4" opacity="0.9"/><ellipse cx="2075" cy="351" rx="16" ry="3" fill="#f4f4f4" opacity="0.9"/><ellipse cx="2227" cy="352" rx="23" ry="5" fill="#f4f4f4" opacity="0.9"/><ellipse cx="2717" cy="358" rx="34" ry="4" fill="#f4f4f4" opacity="0.9"/><ellipse cx="1708" cy="350" rx="11" ry="5" fill="#f4f4f4" opacity="0.9"/><ellipse cx="2381" cy="362" rx="11" ry="4" fill="#f4f4f4" opacity="0.9"/><ellipse cx="2119" cy="1394" rx="20" ry="4" fill="#c8c8c8" opacity="0.6"/><ellipse cx="1630" cy="1391" rx="32" ry="4" fill="#c8c8c8" opacity="0.6"/><ellipse cx="2425" cy="1393" rx="34" ry="4" fill="#c8c8c8" opacity="0.6"/><ellipse cx="1962" cy="1393" rx="37" ry="4" fill="#c8c8c8" opacity="0.6"/><ellipse cx="2041" cy="1395" rx="36" ry="3" fill="#c8c8c8" opacity="0.6"/><ellipse cx="2290" cy="1388" rx="27" ry="3" fill="#c8c8c8" opacity="0.6"/><ellipse cx="1636" cy="1392" rx="40" ry="4" fill="#c8c8c8" opacity="0.6"/><ellipse cx="2414" cy="1388" rx="32" ry="3" fill="#c8c8c8" opacity="0.6"/><ellipse cx="2069" cy="1395" rx="13" ry="4" fill="#c8c8c8" opacity="0.6"/><ellipse cx="1576" cy="1392" rx="24" ry="2" fill="#c8c8c8" opacity="0.6"/><ellipse cx="2378" cy="1390" rx="28" ry="4" fill="#c8c8c8" opacity="0.6"/><ellipse cx="1847" cy="1382" rx="19" ry="3" fill="#c8c8c8" opacity="0.6"/><ellipse cx="1783" cy="1385" rx="37" ry="3" fill="#c8c8c8" opacity="0.6"/><ellipse cx="2070" cy="1396" rx="20" ry="3" fill="#c8c8c8" opacity="0.6"/><ellipse cx="1778" cy="1389" rx="34" ry="4" fill="#c8c8c8" opacity="0.6"/><ellipse cx="2596" cy="1388" rx="27" ry="3" fill="#c8c8c8" opacity="0.6"/><ellipse cx="1703" cy="1390" rx="35" ry="4" fill="#c8c8c8" opacity="0.6"/><ellipse cx="2393" cy="1397" rx="18" ry="2" fill="#c8c8c8" opacity="0.6"/><ellipse cx="2081" cy="1386" rx="16" ry="3" fill="#c8c8c8" opacity="0.6"/><ellipse cx="2291" cy="1390" rx="19" ry="4" fill="#c8c8c8" opacity="0.6"/><ellipse cx="2718" cy="1389" rx="12" ry="2" fill="#c8c8c8" opacity="0.6"/><ellipse cx="2587" cy="1383" rx="31" ry="3" fill="#c8c8c8" opacity="0.6"/><ellipse cx="1911" cy="1395" rx="11" ry="2" fill="#c8c8c8" opacity="0.6"/><ellipse cx="2086" cy="1382" rx="35" ry="2" fill="#c8c8c8" opacity="0.6"/><ellipse cx="1709" cy="1383" rx="29" ry="3" fill="#c8c8c8" opacity="0.6"/><ellipse cx="2296" cy="1392" rx="34" ry="4" fill="#c8c8c8" opacity="0.6"/><ellipse cx="2361" cy="1385" rx="24" ry="2" fill="#c8c8c8" opacity="0.6"/><ellipse cx="1553" cy="1390" rx="31" ry="2" fill="#c8c8c8" opacity="0.6"/><ellipse cx="1867" cy="1388" rx="31" ry="3" fill="#c8c8c8" opacity="0.6"/><ellipse cx="2277" cy="1394" rx="22" ry="4" fill="#c8c8c8" opacity="0.6"/></g>
<path d="M1535 380 L1676 404 L1676 373 L1535 373 Z" fill="#d6d6d6"/>
<g stroke="#bdbdbd" stroke-width="12" fill="none" stroke-linecap="round"><path d="M1530 378 L1876 446 M1939 436 L2080 436 M2128 436 L2330 436 M2381 421 L2747 370"/><path d="M1530 1360 L1878 900 M2747 1360 L2454 1022"/></g>
<g fill="#e2e2e2"><rect x="1687" y="373" width="50" height="992"/><rect x="1894" y="373" width="27" height="992"/><rect x="2080" y="373" width="37" height="992"/><rect x="2338" y="373" width="30" height="992"/><rect x="2550" y="373" width="43" height="992"/></g>
<g fill="#bfbfbf"><rect x="1674" y="373" width="13" height="992"/><rect x="1737" y="373" width="15" height="992"/><rect x="1876" y="373" width="18" height="992"/><rect x="1921" y="373" width="18" height="992"/><rect x="2070" y="373" width="10" height="992"/><rect x="2117" y="373" width="11" height="992"/><rect x="2330" y="373" width="8" height="992"/><rect x="2368" y="373" width="13" height="992"/><rect x="2537" y="373" width="13" height="992"/><rect x="2593" y="373" width="10" height="992"/></g>
<path d="M2075 520 C2040 600 1955 680 1955 790 C1955 930 2080 1120 2200 1350 L2230 1350 C2350 1120 2485 930 2485 790 C2485 680 2400 600 2385 520 Z" fill="#c8c8c8"/>
<path d="M2128 373 L2128 1371 M2330 373 L2330 1371" stroke="#c4c4c4" stroke-width="6" opacity="0.6"/>
<path d="M2098 380 L2098 520 C2080 600 1975 680 1975 790 C1975 930 2090 1110 2205 1340 M2353 380 L2353 520 C2370 600 2465 680 2465 790 C2465 930 2345 1110 2225 1340" stroke="#bcbcbc" stroke-width="50" fill="none"/>
<path d="M2098 380 L2098 520 C2080 600 1975 680 1975 790 C1975 930 2090 1110 2205 1340 M2353 380 L2353 520 C2370 600 2465 680 2465 790 C2465 930 2345 1110 2225 1340" stroke="#e0e0e0" stroke-width="30" fill="none"/>
<path d="M2020 700 C1995 760 2000 880 2080 1000 C2140 1100 2180 1200 2210 1300 M2420 700 C2445 760 2440 880 2360 1000 C2300 1100 2260 1200 2225 1300" stroke="#bdbdbd" stroke-width="8" fill="none"/>
<ellipse cx="2208" cy="783" rx="120" ry="62" fill="none" stroke="#ececec" stroke-width="26"/>
<ellipse cx="2208" cy="783" rx="140" ry="80" fill="none" stroke="#bcbcbc" stroke-width="8"/>
<path d="M2130 790 L2160 770 L2180 795 L2205 765 L2230 795 L2260 770 L2290 790" stroke="#bababa" stroke-width="9" fill="none"/>
<path d="M1972 820 C2060 900 2350 900 2470 820 C2420 960 2030 960 1972 820 Z" fill="#f0f0f0" stroke="none"/>
<path d="M2040 960 C2130 1010 2300 1010 2400 940" stroke="#bcbcbc" stroke-width="10" fill="none"/>
<g stroke="#bdbdbd" stroke-width="12" fill="none" stroke-linecap="square">
<path d="M1136 255 L3222 262 L3222 1453"/><path d="M1136 255 L1136 1453"/>
<path d="M1131 1454 L3140 1456"/>
<path d="M1525 255 L1525 1453 M2755 262 L2755 1453"/>
<path d="M1525 367 L2755 367" stroke-width="13"/><path d="M1525 1371 L2755 1371" stroke-width="13"/>
</g>
<g stroke="#b0b0f8" stroke-width="15" fill="none" stroke-linecap="round"><path d="M2010 948 C2050 940 2090 945 2118 938 M2050 910 L2025 935 M2010 975 C2030 990 2050 995 2060 1005 M2375 940 C2410 935 2440 930 2455 920 M2410 965 L2435 945"/></g>
<path d="M2121 746 C2125.2 730.5 2159.1 719.0 2170 716 C2180.9 713.0 2219.3 714.1 2230 716 C2240.7 717.9 2273.0 719.5 2277 735 C2281.0 750.5 2267.8 852.4 2270 871 C2272.2 889.6 2295.1 906.0 2299 921 C2302.9 936.0 2308.3 998.9 2309 1021 C2309.7 1043.1 2308.5 1128.1 2306 1142 C2303.5 1155.9 2285.4 1147.2 2284 1160 C2282.6 1172.8 2286.9 1258.0 2292 1270 C2297.1 1282.0 2329.3 1276.5 2335 1280 C2340.7 1283.5 2351.9 1300.8 2349 1305 C2346.1 1309.2 2313.2 1321.9 2306 1322 C2298.8 1322.1 2283.4 1316.2 2277 1306 C2270.6 1295.8 2245.5 1235.6 2242 1220 C2238.5 1204.4 2245.2 1172.0 2242 1150 C2238.8 1128.0 2216.4 999.4 2210 1000 C2203.6 1000.6 2181.2 1129.7 2178 1156 C2174.8 1182.3 2179.5 1246.9 2178 1263 C2176.5 1279.1 2171.8 1311.3 2163 1317 C2154.2 1322.7 2097.8 1322.7 2090 1320 C2082.2 1317.3 2081.2 1295.0 2085 1290 C2088.8 1285.0 2123.4 1283.0 2128 1270 C2132.6 1257.0 2133.5 1171.7 2131 1160 C2128.5 1148.3 2106.9 1163.3 2103 1153 C2099.1 1142.7 2092.4 1078.7 2092 1057 C2091.6 1035.3 2095.4 954.6 2099 936 C2102.6 917.4 2125.8 890.0 2128 871 C2130.2 852.0 2116.8 761.5 2121 746 Z" fill="#ffffff"/>
<path d="M2150 1150 C2170 1140 2200 1090 2210 1010 C2225 1090 2250 1140 2290 1155 L2290 1275 C2260 1300 2230 1330 2205 1340 C2180 1330 2160 1300 2150 1280 Z" fill="#f2f2f2"/>
<g opacity="0.9">
<path d="M2060 790 C2080 730 2150 712 2210 712 C2280 712 2340 730 2360 790" stroke="#c2c2c2" stroke-width="12" fill="none"/>
<path d="M2090 800 C2130 760 2290 760 2330 800 C2300 835 2120 835 2090 800 Z" stroke="#bdbdbd" stroke-width="11" fill="none"/>
<path d="M2112 790 L2140 772 L2160 792 L2182 760 L2200 790 L2222 758 L2245 790 L2268 770 L2300 792" stroke="#b8b8b8" stroke-width="6" fill="none"/>
<path d="M2050 845 C2120 880 2300 880 2370 845" stroke="#c4c4c4" stroke-width="10" fill="none"/>
</g>
<g stroke="#d48a8a" stroke-width="4" fill="none" stroke-linejoin="round" stroke-linecap="round"><path d="M2085 533 C2085.7 536.4 2097.5 594.6 2098 600 C2098.5 605.4 2093.4 635.5 2095 640 C2096.6 644.5 2124.8 686.1 2130 690 C2135.2 693.9 2193.0 718.0 2200 718 C2207.0 718.0 2265.0 693.9 2270 690 C2275.0 686.1 2298.8 644.8 2300 640 C2301.2 635.2 2291.8 600.4 2293 595 C2294.2 589.6 2325.2 535.0 2325 533 C2324.8 531.0 2294.2 554.9 2290 555 C2285.8 555.1 2246.0 536.0 2240 535 C2234.0 534.0 2175.8 533.8 2170 535 C2164.2 536.2 2129.2 560.1 2125 560 C2120.8 559.9 2087.0 534.4 2085 533"/><path d="M2120 705 C2117.5 706.5 2075.5 727.8 2070 735 C2064.5 742.2 2012.5 841.5 2010 850 C2007.5 858.5 2017.5 900.2 2020 905 C2022.5 909.8 2056.8 941.2 2060 945 C2063.2 948.8 2082.1 979.5 2085 980 C2087.9 980.5 2119.5 961.5 2118 955 C2116.5 948.5 2054.8 858.6 2055 850 C2055.2 841.4 2117.7 785.4 2121 782"/><path d="M2290 715 C2295.0 719.2 2384.7 786.2 2390 800 C2395.3 813.8 2398.3 979.4 2397 990 C2395.7 1000.6 2365.8 1012.6 2363 1012 C2360.2 1011.4 2341.0 987.5 2341 978 C2341.0 968.5 2365.8 832.6 2363 822 C2360.2 811.4 2287.9 767.9 2284 765"/><path d="M2125 880 C2123.9 883.2 2104.2 936.0 2103 945 C2101.8 954.0 2099.6 1049.8 2100 1060 C2100.4 1070.2 2109.5 1145.0 2112 1150 C2114.5 1155.0 2148.6 1154.0 2150 1160 C2151.4 1166.0 2142.6 1263.9 2140 1270 C2137.4 1276.1 2100.0 1279.3 2098 1282 C2096.0 1284.7 2096.2 1322.0 2100 1324 C2103.8 1326.0 2170.8 1329.7 2175 1322 C2179.2 1314.3 2181.1 1181.6 2183 1170 C2184.9 1158.4 2211.1 1098.2 2213 1090 C2214.9 1081.8 2221.6 1009.2 2222 1005"/><path d="M2222 1005 C2222.8 1009.2 2236.2 1082.8 2238 1090 C2239.8 1097.2 2257.1 1142.9 2258 1150 C2258.9 1157.1 2254.3 1223.8 2256 1232 C2257.7 1240.2 2286.9 1309.5 2292 1314 C2297.1 1318.5 2353.8 1321.6 2357 1322"/><path d="M2272 880 C2274.0 886.0 2309.8 987.0 2312 1000 C2314.2 1013.0 2317.0 1131.9 2316 1140 C2315.0 1148.1 2293.2 1160.9 2292 1162"/></g>
<g stroke="#7cc87c" stroke-width="4" fill="none" stroke-linejoin="round" stroke-linecap="round"><path d="M2088 620 C2086.3 599.2 2089.7 577.0 2110 565 C2130.3 553.0 2178.3 547.2 2210 548 C2241.7 548.8 2282.0 557.2 2300 570 C2318.0 582.8 2321.3 605.0 2318 625 C2314.7 645.0 2299.7 676.2 2280 690 C2260.3 703.8 2226.7 708.0 2200 708 C2173.3 708.0 2138.7 704.7 2120 690 C2101.3 675.3 2089.7 640.8 2088 620 Z"/><path d="M2115 710 C2040 720 1950 740 1880 752 L1872 800 L1888 812 C1960 790 2050 770 2121 765"/><path d="M2288 712 C2360 720 2440 728 2510 735 L2515 765 L2492 795 C2420 780 2340 760 2277 752"/><path d="M2158 612 C2164.7 600.8 2189.0 598.0 2205 598 C2221.0 598.0 2247.3 600.8 2254 612 C2260.7 623.2 2253.2 654.5 2245 665 C2236.8 675.5 2218.3 675.0 2205 675 C2191.7 675.0 2172.8 675.5 2165 665 C2157.2 654.5 2151.3 623.2 2158 612 Z"/><path d="M2162 580 L2180 588 M2235 588 L2252 580 M2185 600 L2225 598 M2178 640 L2205 660 L2230 640"/></g>
<g stroke="#0a0a0a" stroke-width="5" fill="none" stroke-linejoin="round" stroke-linecap="round"><path d="M2107 520 C2107.2 526.8 2107.9 567.5 2109 578 C2110.1 588.5 2114.5 603.5 2116 610 C2117.5 616.5 2119.3 626.8 2122 634 C2124.7 641.2 2133.1 664.5 2139 672 C2144.9 679.5 2164.9 694.0 2173 698 C2181.1 702.0 2199.9 706.0 2208 706 C2216.1 706.0 2234.1 702.0 2242 698 C2249.9 694.0 2270.1 679.0 2276 672 C2281.9 665.0 2290.7 644.6 2293 638 C2295.3 631.4 2294.5 622.0 2296 615 C2297.5 608.0 2305.1 588.7 2306 578 C2306.9 567.3 2304.2 529.4 2304 523"/><path d="M2304 523 L2255 560 M2107 520 L2160 560 M2156 572 L2185 548 L2200 548 L2215 538 L2236 545 L2242 556 L2255 572"/><path d="M2109 585 C2100 595 2100 610 2116 612 L2112 625 L2122 622 M2296 610 L2282 620 L2290 628 L2280 640"/><path d="M2113 666 C2105.9 670.5 2077.1 686.8 2060 700 C2042.9 713.2 1996.5 745.0 1985 765 C1973.5 785.0 1976.0 824.0 1974 850 C1972.0 876.0 1970.5 945.3 1970 960"/><path d="M1970 960 C1990 968 2025 962 2035 943 L2017 925 C2022 880 2026 840 2032 807 C2060 785 2095 762 2121 746"/><path d="M2121 746 C2121.4 754.5 2123.1 793.3 2124 810 C2124.9 826.7 2129.9 858.3 2128 871 C2126.1 883.7 2113.9 893.1 2110 905 C2106.1 916.9 2101.3 939.7 2099 960 C2096.7 980.3 2092.5 1031.3 2093 1057 C2093.5 1082.7 2101.7 1140.2 2103 1153"/><path d="M2103 1153 C2120 1162 2150 1160 2163 1142 C2185 1110 2205 1050 2210 995"/><path d="M2180 986 L2228 986"/><path d="M2210 995 C2211.6 1003.7 2217.3 1044.0 2222 1060 C2226.7 1076.0 2238.6 1103.3 2245 1115 C2251.4 1126.7 2264.8 1142.5 2270 1148 C2275.2 1153.5 2279.2 1156.8 2284 1156 C2288.8 1155.2 2302.5 1154.8 2306 1142 C2309.5 1129.2 2310.0 1081.6 2310 1060 C2310.0 1038.4 2308.0 998.7 2306 980 C2304.0 961.3 2299.8 934.5 2295 920 C2290.2 905.5 2273.1 887.0 2270 871 C2266.9 855.0 2271.5 819.9 2272 800 C2272.5 780.1 2273.7 732.4 2274 722"/><path d="M2284 665 C2292.7 669.7 2330.5 691.6 2349 700 C2367.5 708.4 2411.1 712.0 2423 728 C2434.9 744.0 2434.4 793.3 2438 820 C2441.6 846.7 2448.4 913.6 2450 928"/><path d="M2450 928 C2452 943 2428 950 2420 943 L2407 921 L2423 907 C2410 860 2400 800 2384 770 L2277 750"/><path d="M2131 1160 C2131.0 1168.0 2131.4 1205.3 2131 1220 C2130.6 1234.7 2133.2 1262.8 2128 1270 C2122.8 1277.2 2098.3 1270.0 2092 1274 C2085.7 1278.0 2080.5 1293.9 2081 1300 C2081.5 1306.1 2089.5 1316.9 2096 1320 C2102.5 1323.1 2121.1 1323.4 2130 1323 C2138.9 1322.6 2157.4 1322.7 2163 1317 C2168.6 1311.3 2170.0 1291.6 2172 1280 C2174.0 1268.4 2177.2 1246.0 2178 1230 C2178.8 1214.0 2178.0 1169.3 2178 1160"/><path d="M2242 1146 C2241.7 1151.9 2238.9 1177.5 2240 1190 C2241.1 1202.5 2245.1 1224.5 2250 1240 C2254.9 1255.5 2269.5 1295.1 2277 1306 C2284.5 1316.9 2297.6 1320.4 2306 1322 C2314.4 1323.6 2334.3 1320.9 2340 1318 C2345.7 1315.1 2349.0 1304.8 2349 1300 C2349.0 1295.2 2343.9 1285.5 2340 1282 C2336.1 1278.5 2326.4 1275.6 2320 1274 C2313.6 1272.4 2295.7 1270.5 2292 1270"/><path d="M2163 622 L2185 640 L2165 655 M2245 622 L2222 640 L2242 655 M2197 674 L2212 674"/><path d="M2168 697 C2185 685 2215 685 2232 697 C2220 712 2180 712 2168 697 Z M2180 697 L2195 692 L2205 700 L2220 693"/></g>
<path d="M3191 308 L3191 1422 M3130 308 L3250 308 M3126 1422 L3256 1422 M3142 388 L3237 388 M3142 582 L3237 582 M3142 683 L3237 683 M3142 785 L3237 785 M3142 889 L3237 889 M3142 989 L3237 989 M3142 1085 L3237 1085 M3142 1188 L3237 1188 M3142 1291 L3237 1291 M3142 1384 L3237 1384 M3167 340 L3215 340 M3167 632 L3215 632 M3167 732 L3215 732 M3167 835 L3215 835 M3167 938 L3215 938 M3167 1042 L3215 1042 M3167 1136 L3215 1136 M3167 1239 L3215 1239 M3167 1341 L3215 1341" stroke="#060606" stroke-width="8" fill="none" stroke-linecap="round"/>
<path d="M3167 434 L3215 434" stroke="#5a1414" stroke-width="7" stroke-linecap="round"/>
<path d="M3142 486 L3237 486" stroke="#ff0a0a" stroke-width="8" stroke-linecap="round"/>
<path d="M3167 538 L3215 538" stroke="#1e4a1c" stroke-width="7" stroke-linecap="round"/>
<path d="M3252.5 368.8 L3254.0 364.0 L3253.6 404.0 M3278.0 364.8 C3268.0 368.0 3263.0 384.0 3264.0 396.0 C3265.0 406.0 3280.0 404.8 3279.6 392.8 C3279.0 382.0 3268.0 382.0 3264.4 392.0 M3289.0 364.0 L3287.9 388.0 L3307.7 386.0 M3303.3 368.0 L3302.2 404.0" stroke="#080808" stroke-width="5" fill="none" stroke-linecap="round" stroke-linejoin="round"/>
<path d="M3252.8 467.3 L3254.4 462.0 L3254.0 506.0 M3280.8 462.9 C3269.8 466.4 3264.3 484.0 3265.4 497.2 C3266.5 508.2 3283.0 506.9 3282.6 493.7 C3281.9 481.8 3269.8 481.8 3265.8 492.8 M3309.8 462.9 C3297.7 466.4 3291.7 484.0 3292.9 497.2 C3294.1 508.2 3312.3 506.9 3311.8 493.7 C3311.1 481.8 3297.7 481.8 3293.4 492.8" stroke="#080808" stroke-width="5" fill="none" stroke-linecap="round" stroke-linejoin="round"/>
<path d="M3252.9 565.5 L3254.6 560.0 L3254.1 606.0 M3282.2 560.9 C3270.7 564.6 3265.0 583.0 3266.1 596.8 C3267.2 608.3 3284.5 606.9 3284.0 593.1 C3283.4 580.7 3270.7 580.7 3266.6 592.2 M3305.0 580.7 C3292.3 576.1 3294.9 559.1 3306.2 560.9 C3316.4 562.3 3313.8 578.4 3305.0 582.1 C3292.3 587.6 3293.6 606.9 3305.0 606.0 C3316.4 605.1 3317.6 587.6 3305.0 580.7" stroke="#080808" stroke-width="5" fill="none" stroke-linecap="round" stroke-linejoin="round"/>
<path d="M3252.5 669.7 L3253.9 665.0 L3253.5 704.0 M3261.7 667.0 L3281.2 665.0 L3268.5 704.0 M3296.6 668.9 C3285.9 670.9 3287.0 702.0 3296.6 700.1 C3306.3 698.1 3306.3 668.9 3296.6 668.9" stroke="#080808" stroke-width="5" fill="none" stroke-linecap="round" stroke-linejoin="round"/>
<path d="M3252.5 767.7 L3253.9 763.0 L3253.5 802.0 M3261.7 765.0 L3281.2 763.0 L3268.5 802.0 M3287.0 771.6 C3289.1 761.0 3306.3 761.0 3304.1 776.6 L3287.0 802.0 L3307.3 798.1" stroke="#080808" stroke-width="5" fill="none" stroke-linecap="round" stroke-linejoin="round"/>
<path d="M3252.8 871.3 L3254.4 866.0 L3254.0 910.0 M3263.2 868.2 L3285.2 866.0 L3270.9 910.0 M3292.9 866.0 L3291.7 892.4 L3313.5 890.2 M3308.6 870.4 L3307.4 910.0" stroke="#080808" stroke-width="5" fill="none" stroke-linecap="round" stroke-linejoin="round"/>
<path d="M3252.6 971.0 L3254.2 966.0 L3253.8 1008.0 M3262.6 968.1 L3283.6 966.0 L3269.9 1008.0 M3307.1 966.8 C3295.6 970.2 3289.8 987.0 3290.9 999.6 C3292.1 1010.1 3309.4 1008.8 3309.0 996.2 C3308.3 984.9 3295.6 984.9 3291.4 995.4" stroke="#080808" stroke-width="5" fill="none" stroke-linecap="round" stroke-linejoin="round"/>
<path d="M3252.6 1066.9 L3254.1 1062.0 L3253.7 1103.0 M3262.3 1064.0 L3282.8 1062.0 L3269.5 1103.0 M3299.0 1080.5 C3287.7 1076.3 3290.0 1061.2 3300.1 1062.8 C3309.1 1064.0 3306.9 1078.4 3299.0 1081.7 C3287.7 1086.6 3288.8 1103.8 3299.0 1103.0 C3309.1 1102.2 3310.3 1086.6 3299.0 1080.5" stroke="#080808" stroke-width="5" fill="none" stroke-linecap="round" stroke-linejoin="round"/>
<path d="M3252.6 1171.0 L3254.2 1166.0 L3253.8 1208.0 M3273.1 1184.9 C3262.6 1180.7 3264.7 1165.2 3274.2 1166.8 C3282.5 1168.1 3280.4 1182.8 3273.1 1186.2 C3262.6 1191.2 3263.7 1208.8 3273.1 1208.0 C3282.5 1207.2 3283.6 1191.2 3273.1 1184.9 M3300.2 1170.2 C3288.6 1172.3 3289.8 1205.9 3300.2 1203.8 C3310.6 1201.7 3310.6 1170.2 3300.2 1170.2" stroke="#080808" stroke-width="5" fill="none" stroke-linecap="round" stroke-linejoin="round"/>
<path d="M3252.5 1272.8 L3254.0 1268.0 L3253.6 1308.0 M3272.0 1286.0 C3262.0 1282.0 3264.0 1267.2 3273.0 1268.8 C3281.0 1270.0 3279.0 1284.0 3272.0 1287.2 C3262.0 1292.0 3263.0 1308.8 3272.0 1308.0 C3281.0 1307.2 3282.0 1292.0 3272.0 1286.0 M3287.9 1276.8 C3290.1 1266.0 3307.7 1266.0 3305.5 1282.0 L3287.9 1308.0 L3308.8 1304.0" stroke="#080808" stroke-width="5" fill="none" stroke-linecap="round" stroke-linejoin="round"/>
<path d="M3252.5 1368.8 L3254.0 1364.0 L3253.6 1404.0 M3272.0 1382.0 C3262.0 1378.0 3264.0 1363.2 3273.0 1364.8 C3281.0 1366.0 3279.0 1380.0 3272.0 1383.2 C3262.0 1388.0 3263.0 1404.8 3272.0 1404.0 C3281.0 1403.2 3282.0 1388.0 3272.0 1382.0 M3289.0 1364.0 L3287.9 1388.0 L3307.7 1386.0 M3303.3 1368.0 L3302.2 1404.0" stroke="#080808" stroke-width="5" fill="none" stroke-linecap="round" stroke-linejoin="round"/>
<path d="M3152.9 224.4 L3155.7 215.0 L3155.0 293.0 M3206.6 216.6 C3184.6 222.8 3173.6 254.0 3175.8 277.4 C3178.0 296.9 3211.0 294.6 3210.1 271.2 C3208.8 250.1 3184.6 250.1 3176.6 269.6 M3226.9 232.2 C3231.3 211.1 3266.5 211.1 3262.1 242.3 L3226.9 293.0 L3268.7 285.2" stroke="#080808" stroke-width="5.5" fill="none" stroke-linecap="round" stroke-linejoin="round"/>
<path d="M3146.2 1444.4 L3148.6 1437.0 L3148.0 1499.0 M3180.4 1464.9 C3161.4 1458.7 3165.2 1435.8 3182.3 1438.2 C3197.5 1440.1 3193.7 1461.8 3180.4 1466.8 C3161.4 1474.2 3163.3 1500.2 3180.4 1499.0 C3197.5 1497.8 3199.4 1474.2 3180.4 1464.9 M3244.9 1437.0 L3216.9 1438.2 L3212.9 1464.9 C3230.9 1455.6 3248.9 1474.2 3238.9 1494.0 C3230.9 1504.0 3214.9 1500.2 3206.9 1492.8" stroke="#080808" stroke-width="5.5" fill="none" stroke-linecap="round" stroke-linejoin="round"/>
</svg>
<div class="a" style="left:536px;top:156px;width:20px;height:20px;border-radius:50%;background:radial-gradient(circle at 50% 50%,rgba(255,255,255,0.55) 0,rgba(255,255,255,0) 60%),conic-gradient(#ff00ff 0deg,#ff5ab4 70deg,#ff9a50 105deg,#ffff00 135deg,#80ff80 170deg,#00ffff 220deg,#50b0ff 255deg,#a070ff 295deg,#ff00ff 360deg)"></div><svg style="left:534.4px;top:156.5px" width="23.2" height="16.8" viewBox="0 0 22 16"><path d="M1 1 L11 8.5" stroke="#454545" stroke-width="3.6" stroke-linecap="round"/><path d="M11 8.5 L13.5 10.3" stroke="#cfcfcf" stroke-width="2.6"/><path d="M13.5 10.3 L16.5 12.8" stroke="#111" stroke-width="4" stroke-linecap="round"/></svg>
<div class="t" style="left:2036px;top:160px;font-size:17.5px;color:#dcdcdc;">roughAnimation_seq4.kra (1.4 GiB)</div>
<svg style="left:3799px;top:160px" width="17" height="17" viewBox="0 0 24 24"><path d="M3 3 L21 21 M21 3 L3 21" stroke="#e0e0e0" stroke-width="2.2"/></svg>
<div class="a" style="left:3820px;top:191px;width:18px;height:1310px;background:#3a3a3a"></div>
<div class="a" style="left:3821px;top:192px;width:16px;height:20px;background:#444;border:1px solid #555"></div>
<svg style="left:3823px;top:197px" width="12" height="7" viewBox="0 0 12 7"><path d="M0 7 H12 L6 0 Z" fill="#8e8e8e"/></svg>
<div class="a" style="left:3820px;top:618px;width:17px;height:454px;background:#444444;border:1px solid #555"></div>
<div class="a" style="left:3821px;top:1481px;width:16px;height:20px;background:#444;border:1px solid #555"></div>
<svg style="left:3823px;top:1488px" width="12" height="7" viewBox="0 0 12 7"><path d="M0 0 H12 L6.0 7 Z" fill="#8e8e8e"/></svg>
<div class="a" style="left:517px;top:1501px;width:3303px;height:21px;background:#3a3a3a"></div>
<div class="a" style="left:517px;top:1502px;width:20px;height:19px;background:#444;border:1px solid #555"></div>
<svg style="left:522px;top:1506px" width="7" height="12" viewBox="0 0 7 12"><path d="M7 0 V12 L0 6 Z" fill="#8e8e8e"/></svg>
<div class="a" style="left:1518px;top:1502px;width:1298px;height:19px;background:#424242;border:1px solid #505050"></div>
<div class="a" style="left:3799px;top:1502px;width:20px;height:19px;background:#444;border:1px solid #555"></div>
<svg style="left:3806px;top:1506px" width="7" height="12" viewBox="0 0 7 12"><path d="M0 0 V12 L7 6 Z" fill="#8e8e8e"/></svg>
<div class="a" style="left:1914px;top:1527px;width:16px;height:2px;background:repeating-linear-gradient(90deg,#8a8a8a 0 1px,transparent 1px 3px)"></div>
<div class="a" style="left:1px;top:1533px;width:170px;height:37px;background:#4a4a4a;border:1px solid #575757;border-bottom:none;border-radius:3px 3px 0 0"></div><div class="t" style="left:18px;top:1544px;font-size:16px;color:#dcdcdc;">Animation Timeline</div>
<div class="a" style="left:172px;top:1535px;width:158px;height:35px;background:#414141;border:1px solid #575757;border-bottom:none;border-radius:3px 3px 0 0"></div><div class="t" style="left:189px;top:1545px;font-size:16px;color:#dcdcdc;">Animation Curves</div>
<div class="a" style="left:0;top:1569px;width:3245px;height:1px;background:#5a5a5a"></div>
<div class="t" style="left:13px;top:1580px;font-size:16px;color:#dcdcdc;">Animation Timeline</div>
<svg style="left:187px;top:1575px" width="19" height="19" viewBox="0 0 24 24"><path d="M3 3 H5.5 V21 H3 Z M21 3 V21 L8 12 Z M17.5 3 H19.5 V21 H17.5 Z" fill="#d2d2d2"/></svg>
<svg style="left:218px;top:1575px" width="19" height="19" viewBox="0 0 24 24"><path d="M16 3 V21 L4 12 Z M18 3 H20.5 V21 H18 Z" fill="#d2d2d2"/></svg>
<svg style="left:246px;top:1575px" width="19" height="19" viewBox="0 0 24 24"><rect x="4" y="4" width="16" height="16" fill="#d2d2d2"/></svg>
<svg style="left:276px;top:1575px" width="19" height="19" viewBox="0 0 24 24"><path d="M6 3 V21 L19 12 Z" fill="#d2d2d2"/></svg>
<svg style="left:306px;top:1575px" width="19" height="19" viewBox="0 0 24 24"><path d="M8 3 V21 L20 12 Z M3.5 3 H6 V21 H3.5 Z" fill="#d2d2d2"/></svg>
<svg style="left:336px;top:1575px" width="19" height="19" viewBox="0 0 24 24"><path d="M3 3 V21 L16 12 Z M18.5 3 H21 V21 H18.5 Z M4.5 3 H6.5 V21 H4.5 Z" fill="#d2d2d2"/></svg>
<div class="a" style="left:376px;top:1573px;width:90px;height:29px;background:#373737;border:1px solid #505050;border-radius:3px"></div>
<div class="a" style="left:445px;top:1574px;width:20px;height:27px;background:#3d3d3d"></div>
<div class="t" style="left:382px;top:1580px;font-size:16.5px;color:#dcdcdc;">#&nbsp; 166</div>
<svg style="left:448px;top:1577px" width="14" height="22" viewBox="0 0 14 22"><path d="M2 8 L7 3 L12 8 Z M2 14 L7 19 L12 14 Z" fill="#777"/></svg>
<div class="a" style="left:484px;top:1573px;width:28px;height:29px;background:#3b3b3b;border:1px solid #505050;border-radius:3px"></div>
<svg style="left:487px;top:1577px" width="22" height="22" viewBox="0 0 24 24"><rect x="2" y="4" width="20" height="16" stroke="#d2d2d2" stroke-width="1.6" fill="none"/><path d="M9 8 L15 12 L9 16 Z" fill="#d2d2d2"/><path d="M4 6 V18 M20 6 V18" stroke="#d2d2d2" stroke-width="2" stroke-dasharray="1.5 1.5"/><path d="M16 1 L13 7 M8 17 L5 23" stroke="#d2d2d2" stroke-width="1.4"/></svg>
<div class="a" style="left:514px;top:1573px;width:130px;height:29px;background:#373737;border:1px solid #505050;border-radius:3px;overflow:hidden"><div class="a" style="left:0;top:0;width:47px;height:27px;background:#52708f"></div></div>
<div class="a" style="left:623px;top:1574px;width:20px;height:27px;background:#3d3d3d"></div>
<div class="t" style="left:521px;top:1580px;font-size:16.5px;color:#e4e4e4;">Speed: 100 %</div>
<svg style="left:626px;top:1577px" width="14" height="22" viewBox="0 0 14 22"><path d="M2 8 L7 3 L12 8 Z M2 14 L7 19 L12 14 Z" fill="#777"/></svg>
<svg style="left:665px;top:1576px" width="21" height="21" viewBox="0 0 24 24"><rect x="2" y="5" width="20" height="14" stroke="#d2d2d2" stroke-width="2" fill="none"/><path d="M4 7 V17 M20 7 V17" stroke="#d2d2d2" stroke-width="2" stroke-dasharray="1.5 1.5"/></svg>
<svg style="left:695px;top:1576px" width="21" height="21" viewBox="0 0 24 24"><rect x="6" y="3" width="16" height="12" stroke="#d2d2d2" stroke-width="2" fill="none"/><rect x="2" y="8" width="16" height="12" fill="#474747" stroke="#d2d2d2" stroke-width="2"/></svg>
<svg style="left:725px;top:1576px" width="21" height="21" viewBox="0 0 24 24"><rect x="2" y="5" width="20" height="14" stroke="#d2d2d2" stroke-width="2" fill="none"/><path d="M18 2 L6 22" stroke="#d2d2d2" stroke-width="2"/></svg>
<svg style="left:3036px;top:1576px" width="21" height="21" viewBox="0 0 24 24"><path d="M12 2 C8 6 3 11 3 16 C3 20 6 22 9 22 C6 18 7 10 12 2 Z M12 2 C10 8 9 16 12 22 C15 16 14 8 12 2 Z M12 2 C17 10 18 18 15 22 C18 22 21 20 21 16 C21 11 16 6 12 2 Z" fill="#d2d2d2"/></svg>
<svg style="left:3068px;top:1576px" width="22" height="22" viewBox="0 0 24 24"><path d="M2 8 H5 V15 H2 Z M6 8 L12 3 V20 L6 15 Z" fill="#d2d2d2"/><path d="M13 17 H23 L18 22 Z" fill="#8a8a8a"/></svg>
<svg style="left:3097px;top:1577px" width="22" height="22" viewBox="0 0 24 24"><path d="M2 3 H22 M2 9 H22 M2 15 H22" stroke="#d2d2d2" stroke-width="2.6"/><path d="M14 16 H24 L19 21 Z" fill="#8a8a8a"/></svg>
<svg style="left:3162px;top:1577px" width="21" height="21" viewBox="0 0 24 24"><path d="M2 10 H13 V22 H2 Z M8 4 H22 V15 H13 M8 10 V4" stroke="#d2d2d2" stroke-width="2" fill="none"/><path d="M8 5 H22" stroke="#d2d2d2" stroke-width="3"/><path d="M2 11 H13" stroke="#d2d2d2" stroke-width="3"/></svg>
<svg style="left:3204px;top:1579px" width="16" height="16" viewBox="0 0 24 24"><path d="M3 3 L21 21 M21 3 L3 21" stroke="#d2d2d2" stroke-width="2.2"/></svg>
<div class="a" style="left:0;top:1603px;width:3245px;height:423px;background:#363636"></div>
<div class="a" style="left:2px;top:1604px;width:263px;height:30px;background:#3c3c3c;border-bottom:1px solid #2e2e2e"></div>
<svg style="left:8px;top:1610px" width="22" height="22" viewBox="0 0 24 24"><path d="M10 2 V18 M2 10 H18" stroke="#d2d2d2" stroke-width="2.4"/><path d="M12 16 H22 L17 21 Z" fill="#8a8a8a"/></svg>
<svg style="left:239px;top:1610px" width="18" height="18" viewBox="0 0 24 24"><rect x="2" y="4" width="20" height="16" stroke="#d2d2d2" stroke-width="1.8" fill="none"/><path d="M5 12 H19 M5 12 L8 9 M5 12 L8 15 M19 12 L16 9 M19 12 L16 15" stroke="#d2d2d2" stroke-width="2" fill="none"/></svg>
<div class="a" style="left:265px;top:1603px;width:2980px;height:31px;background:#333333"></div>
<div class="a" style="left:265px;top:1634px;width:2980px;height:31px;background:#3a3a3a"></div>
<div class="a" style="left:265px;top:1665px;width:2980px;height:31px;background:#393f47"></div>
<div class="a" style="left:265px;top:1696px;width:2980px;height:31px;background:#3d4550"></div>
<div class="a" style="left:265px;top:1727px;width:2980px;height:31px;background:#3a3a3a"></div>
<div class="a" style="left:265px;top:1758px;width:2980px;height:31px;background:#3a3a3a"></div>
<div class="a" style="left:266px;top:1626px;width:33px;height:8px;background:#6e6e6e"></div>
<div class="a" style="left:265px;top:1665px;width:1px;height:62px;background:#31363c"></div>
<div class="a" style="left:299px;top:1612px;width:1px;height:14px;background:#444"></div>
<div class="a" style="left:300px;top:1626px;width:71px;height:8px;background:#6e6e6e"></div>
<div class="t" style="left:303px;top:1609px;font-size:15.5px;color:#d4d4d4;">130</div>
<div class="a" style="left:299px;top:1665px;width:1px;height:62px;background:#31363c"></div>
<div class="a" style="left:371px;top:1612px;width:1px;height:14px;background:#444"></div>
<div class="a" style="left:372px;top:1626px;width:71px;height:8px;background:#6e6e6e"></div>
<div class="t" style="left:375px;top:1609px;font-size:15.5px;color:#d4d4d4;">131</div>
<div class="a" style="left:371px;top:1665px;width:1px;height:62px;background:#31363c"></div>
<div class="a" style="left:443px;top:1612px;width:1px;height:14px;background:#444"></div>
<div class="a" style="left:444px;top:1626px;width:71px;height:8px;background:#6e6e6e"></div>
<div class="t" style="left:447px;top:1609px;font-size:15.5px;color:#d4d4d4;">132</div>
<div class="a" style="left:443px;top:1665px;width:1px;height:62px;background:#31363c"></div>
<div class="a" style="left:515px;top:1612px;width:1px;height:14px;background:#444"></div>
<div class="a" style="left:516px;top:1626px;width:71px;height:8px;background:#6e6e6e"></div>
<div class="t" style="left:519px;top:1609px;font-size:15.5px;color:#d4d4d4;">133</div>
<div class="a" style="left:515px;top:1665px;width:1px;height:62px;background:#31363c"></div>
<div class="a" style="left:587px;top:1612px;width:1px;height:14px;background:#444"></div>
<div class="a" style="left:588px;top:1626px;width:71px;height:8px;background:#6e6e6e"></div>
<div class="t" style="left:591px;top:1609px;font-size:15.5px;color:#d4d4d4;">134</div>
<div class="a" style="left:587px;top:1665px;width:1px;height:62px;background:#31363c"></div>
<div class="a" style="left:659px;top:1612px;width:1px;height:14px;background:#444"></div>
<div class="a" style="left:660px;top:1626px;width:71px;height:8px;background:#6e6e6e"></div>
<div class="t" style="left:663px;top:1609px;font-size:15.5px;color:#d4d4d4;">135</div>
<div class="a" style="left:659px;top:1665px;width:1px;height:62px;background:#31363c"></div>
<div class="a" style="left:731px;top:1612px;width:1px;height:14px;background:#444"></div>
<div class="a" style="left:732px;top:1626px;width:71px;height:8px;background:#6e6e6e"></div>
<div class="t" style="left:735px;top:1609px;font-size:15.5px;color:#d4d4d4;">136</div>
<div class="a" style="left:731px;top:1665px;width:1px;height:62px;background:#31363c"></div>
<div class="a" style="left:803px;top:1612px;width:1px;height:14px;background:#444"></div>
<div class="a" style="left:804px;top:1626px;width:71px;height:8px;background:#6e6e6e"></div>
<div class="t" style="left:807px;top:1609px;font-size:15.5px;color:#d4d4d4;">137</div>
<div class="a" style="left:803px;top:1665px;width:1px;height:62px;background:#31363c"></div>
<div class="a" style="left:875px;top:1612px;width:1px;height:14px;background:#444"></div>
<div class="a" style="left:876px;top:1626px;width:71px;height:8px;background:#6e6e6e"></div>
<div class="t" style="left:879px;top:1609px;font-size:15.5px;color:#d4d4d4;">138</div>
<div class="a" style="left:875px;top:1665px;width:1px;height:62px;background:#31363c"></div>
<div class="a" style="left:947px;top:1612px;width:1px;height:14px;background:#444"></div>
<div class="a" style="left:948px;top:1626px;width:71px;height:8px;background:#6e6e6e"></div>
<div class="t" style="left:951px;top:1609px;font-size:15.5px;color:#d4d4d4;">139</div>
<div class="a" style="left:947px;top:1665px;width:1px;height:62px;background:#31363c"></div>
<div class="a" style="left:1019px;top:1612px;width:1px;height:14px;background:#444"></div>
<div class="a" style="left:1020px;top:1626px;width:71px;height:8px;background:#6e6e6e"></div>
<div class="t" style="left:1023px;top:1609px;font-size:15.5px;color:#d4d4d4;">140</div>
<div class="a" style="left:1019px;top:1665px;width:1px;height:62px;background:#31363c"></div>
<div class="a" style="left:1091px;top:1612px;width:1px;height:14px;background:#444"></div>
<div class="a" style="left:1092px;top:1626px;width:71px;height:8px;background:#6e6e6e"></div>
<div class="t" style="left:1095px;top:1609px;font-size:15.5px;color:#d4d4d4;">141</div>
<div class="a" style="left:1091px;top:1665px;width:1px;height:62px;background:#31363c"></div>
<div class="a" style="left:1163px;top:1612px;width:1px;height:14px;background:#444"></div>
<div class="a" style="left:1164px;top:1626px;width:71px;height:8px;background:#6e6e6e"></div>
<div class="t" style="left:1167px;top:1609px;font-size:15.5px;color:#d4d4d4;">142</div>
<div class="a" style="left:1163px;top:1665px;width:1px;height:62px;background:#31363c"></div>
<div class="a" style="left:1235px;top:1612px;width:1px;height:14px;background:#444"></div>
<div class="a" style="left:1236px;top:1626px;width:71px;height:8px;background:#6e6e6e"></div>
<div class="t" style="left:1239px;top:1609px;font-size:15.5px;color:#d4d4d4;">143</div>
<div class="a" style="left:1235px;top:1665px;width:1px;height:62px;background:#31363c"></div>
<div class="a" style="left:1307px;top:1612px;width:1px;height:14px;background:#444"></div>
<div class="a" style="left:1308px;top:1626px;width:71px;height:8px;background:#6e6e6e"></div>
<div class="t" style="left:1311px;top:1609px;font-size:15.5px;color:#d4d4d4;">144</div>
<div class="a" style="left:1307px;top:1665px;width:1px;height:62px;background:#31363c"></div>
<div class="a" style="left:1379px;top:1612px;width:1px;height:14px;background:#444"></div>
<div class="a" style="left:1380px;top:1626px;width:71px;height:8px;background:#6e6e6e"></div>
<div class="t" style="left:1383px;top:1609px;font-size:15.5px;color:#d4d4d4;">145</div>
<div class="a" style="left:1379px;top:1665px;width:1px;height:62px;background:#31363c"></div>
<div class="a" style="left:1451px;top:1612px;width:1px;height:14px;background:#444"></div>
<div class="a" style="left:1452px;top:1626px;width:71px;height:8px;background:#6e6e6e"></div>
<div class="t" style="left:1455px;top:1609px;font-size:15.5px;color:#d4d4d4;">146</div>
<div class="a" style="left:1451px;top:1665px;width:1px;height:62px;background:#31363c"></div>
<div class="a" style="left:1523px;top:1612px;width:1px;height:14px;background:#444"></div>
<div class="a" style="left:1524px;top:1626px;width:71px;height:8px;background:#6e6e6e"></div>
<div class="t" style="left:1527px;top:1609px;font-size:15.5px;color:#d4d4d4;">147</div>
<div class="a" style="left:1523px;top:1665px;width:1px;height:62px;background:#31363c"></div>
<div class="a" style="left:1595px;top:1612px;width:1px;height:14px;background:#444"></div>
<div class="a" style="left:1596px;top:1626px;width:71px;height:8px;background:#6e6e6e"></div>
<div class="t" style="left:1599px;top:1609px;font-size:15.5px;color:#d4d4d4;">148</div>
<div class="a" style="left:1595px;top:1665px;width:1px;height:62px;background:#31363c"></div>
<div class="a" style="left:1667px;top:1612px;width:1px;height:14px;background:#444"></div>
<div class="a" style="left:1668px;top:1626px;width:71px;height:8px;background:#6e6e6e"></div>
<div class="t" style="left:1671px;top:1609px;font-size:15.5px;color:#d4d4d4;">149</div>
<div class="a" style="left:1667px;top:1665px;width:1px;height:62px;background:#31363c"></div>
<div class="a" style="left:1739px;top:1612px;width:1px;height:14px;background:#444"></div>
<div class="a" style="left:1740px;top:1626px;width:71px;height:8px;background:#6e6e6e"></div>
<div class="t" style="left:1743px;top:1609px;font-size:15.5px;color:#d4d4d4;">150</div>
<div class="a" style="left:1739px;top:1665px;width:1px;height:62px;background:#31363c"></div>
<div class="a" style="left:1811px;top:1612px;width:1px;height:14px;background:#444"></div>
<div class="a" style="left:1812px;top:1626px;width:71px;height:8px;background:#6e6e6e"></div>
<div class="t" style="left:1815px;top:1609px;font-size:15.5px;color:#d4d4d4;">151</div>
<div class="a" style="left:1811px;top:1665px;width:1px;height:62px;background:#31363c"></div>
<div class="a" style="left:1883px;top:1612px;width:1px;height:14px;background:#444"></div>
<div class="a" style="left:1884px;top:1626px;width:71px;height:8px;background:#6e6e6e"></div>
<div class="t" style="left:1887px;top:1609px;font-size:15.5px;color:#d4d4d4;">152</div>
<div class="a" style="left:1883px;top:1665px;width:1px;height:62px;background:#31363c"></div>
<div class="a" style="left:1955px;top:1612px;width:1px;height:14px;background:#444"></div>
<div class="a" style="left:1956px;top:1626px;width:71px;height:8px;background:#6e6e6e"></div>
<div class="t" style="left:1959px;top:1609px;font-size:15.5px;color:#d4d4d4;">153</div>
<div class="a" style="left:1955px;top:1665px;width:1px;height:62px;background:#31363c"></div>
<div class="a" style="left:2027px;top:1612px;width:1px;height:14px;background:#444"></div>
<div class="a" style="left:2028px;top:1626px;width:71px;height:8px;background:#6e6e6e"></div>
<div class="t" style="left:2031px;top:1609px;font-size:15.5px;color:#d4d4d4;">154</div>
<div class="a" style="left:2027px;top:1665px;width:1px;height:62px;background:#31363c"></div>
<div class="a" style="left:2099px;top:1612px;width:1px;height:14px;background:#444"></div>
<div class="a" style="left:2100px;top:1626px;width:71px;height:8px;background:#6e6e6e"></div>
<div class="t" style="left:2103px;top:1609px;font-size:15.5px;color:#d4d4d4;">155</div>
<div class="a" style="left:2099px;top:1665px;width:1px;height:62px;background:#31363c"></div>
<div class="a" style="left:2171px;top:1612px;width:1px;height:14px;background:#444"></div>
<div class="a" style="left:2172px;top:1626px;width:71px;height:8px;background:#6e6e6e"></div>
<div class="t" style="left:2175px;top:1609px;font-size:15.5px;color:#d4d4d4;">156</div>
<div class="a" style="left:2171px;top:1665px;width:1px;height:62px;background:#31363c"></div>
<div class="a" style="left:2243px;top:1612px;width:1px;height:14px;background:#444"></div>
<div class="a" style="left:2244px;top:1626px;width:71px;height:8px;background:#6e6e6e"></div>
<div class="t" style="left:2247px;top:1609px;font-size:15.5px;color:#d4d4d4;">157</div>
<div class="a" style="left:2243px;top:1665px;width:1px;height:62px;background:#31363c"></div>
<div class="a" style="left:2315px;top:1612px;width:1px;height:14px;background:#444"></div>
<div class="a" style="left:2316px;top:1626px;width:71px;height:8px;background:#6e6e6e"></div>
<div class="t" style="left:2319px;top:1609px;font-size:15.5px;color:#d4d4d4;">158</div>
<div class="a" style="left:2315px;top:1665px;width:1px;height:62px;background:#31363c"></div>
<div class="a" style="left:2387px;top:1612px;width:1px;height:14px;background:#444"></div>
<div class="a" style="left:2388px;top:1626px;width:71px;height:8px;background:#6e6e6e"></div>
<div class="t" style="left:2391px;top:1609px;font-size:15.5px;color:#d4d4d4;">159</div>
<div class="a" style="left:2387px;top:1665px;width:1px;height:62px;background:#31363c"></div>
<div class="a" style="left:2459px;top:1612px;width:1px;height:14px;background:#444"></div>
<div class="a" style="left:2460px;top:1626px;width:71px;height:8px;background:#6e6e6e"></div>
<div class="t" style="left:2463px;top:1609px;font-size:15.5px;color:#d4d4d4;">160</div>
<div class="a" style="left:2459px;top:1665px;width:1px;height:62px;background:#31363c"></div>
<div class="a" style="left:2531px;top:1612px;width:1px;height:14px;background:#444"></div>
<div class="a" style="left:2532px;top:1626px;width:71px;height:8px;background:#6e6e6e"></div>
<div class="t" style="left:2535px;top:1609px;font-size:15.5px;color:#d4d4d4;">161</div>
<div class="a" style="left:2531px;top:1665px;width:1px;height:62px;background:#31363c"></div>
<div class="a" style="left:2603px;top:1612px;width:1px;height:14px;background:#444"></div>
<div class="a" style="left:2604px;top:1626px;width:71px;height:8px;background:#6e6e6e"></div>
<div class="t" style="left:2607px;top:1609px;font-size:15.5px;color:#d4d4d4;">162</div>
<div class="a" style="left:2603px;top:1665px;width:1px;height:62px;background:#31363c"></div>
<div class="a" style="left:2675px;top:1612px;width:1px;height:14px;background:#444"></div>
<div class="a" style="left:2676px;top:1626px;width:71px;height:8px;background:#6e6e6e"></div>
<div class="t" style="left:2679px;top:1609px;font-size:15.5px;color:#d4d4d4;">163</div>
<div class="a" style="left:2675px;top:1665px;width:1px;height:62px;background:#31363c"></div>
<div class="a" style="left:2747px;top:1612px;width:1px;height:14px;background:#444"></div>
<div class="a" style="left:2748px;top:1626px;width:71px;height:8px;background:#6e6e6e"></div>
<div class="t" style="left:2751px;top:1609px;font-size:15.5px;color:#d4d4d4;">164</div>
<div class="a" style="left:2747px;top:1665px;width:1px;height:62px;background:#31363c"></div>
<div class="a" style="left:2819px;top:1612px;width:1px;height:14px;background:#444"></div>
<div class="a" style="left:2820px;top:1626px;width:71px;height:8px;background:#6e6e6e"></div>
<div class="t" style="left:2823px;top:1609px;font-size:15.5px;color:#d4d4d4;">165</div>
<div class="a" style="left:2819px;top:1665px;width:1px;height:62px;background:#31363c"></div>
<div class="a" style="left:2891px;top:1612px;width:1px;height:14px;background:#444"></div>
<div class="a" style="left:2892px;top:1626px;width:71px;height:8px;background:#6e6e6e"></div>
<div class="t" style="left:2895px;top:1609px;font-size:15.5px;color:#d4d4d4;">166</div>
<div class="a" style="left:2891px;top:1665px;width:1px;height:62px;background:#31363c"></div>
<div class="a" style="left:2963px;top:1612px;width:1px;height:14px;background:#444"></div>
<div class="a" style="left:2964px;top:1626px;width:71px;height:8px;background:#6e6e6e"></div>
<div class="t" style="left:2967px;top:1609px;font-size:15.5px;color:#d4d4d4;">167</div>
<div class="a" style="left:2963px;top:1665px;width:1px;height:62px;background:#31363c"></div>
<div class="a" style="left:3035px;top:1612px;width:1px;height:14px;background:#444"></div>
<div class="a" style="left:3036px;top:1626px;width:71px;height:8px;background:#6e6e6e"></div>
<div class="t" style="left:3039px;top:1609px;font-size:15.5px;color:#d4d4d4;">168</div>
<div class="a" style="left:3035px;top:1665px;width:1px;height:62px;background:#31363c"></div>
<div class="a" style="left:3107px;top:1612px;width:1px;height:14px;background:#444"></div>
<div class="a" style="left:3108px;top:1626px;width:71px;height:8px;background:#6e6e6e"></div>
<div class="t" style="left:3111px;top:1609px;font-size:15.5px;color:#d4d4d4;">169</div>
<div class="a" style="left:3107px;top:1665px;width:1px;height:62px;background:#31363c"></div>
<div class="a" style="left:3179px;top:1612px;width:1px;height:14px;background:#444"></div>
<div class="a" style="left:3180px;top:1626px;width:64px;height:8px;background:#6e6e6e"></div>
<div class="t" style="left:3183px;top:1609px;font-size:15.5px;color:#d4d4d4;">170</div>
<div class="a" style="left:3179px;top:1665px;width:1px;height:62px;background:#31363c"></div>
<div class="a" style="left:266px;top:1680px;width:2978px;height:1px;background:#5a7896"></div>
<div class="a" style="left:266px;top:1742px;width:2978px;height:1px;background:#3e4a58"></div>
<div class="a" style="left:265px;top:1664px;width:2980px;height:1px;background:#2f2f2f"></div>
<div class="a" style="left:265px;top:1695px;width:2980px;height:1px;background:#2f2f2f"></div>
<div class="a" style="left:265px;top:1726px;width:2980px;height:1px;background:#2f2f2f"></div>
<div class="a" style="left:371px;top:1665px;width:72px;height:31px;background:#537393"></div>
<div class="a" style="left:875px;top:1665px;width:72px;height:31px;background:#537393"></div>
<div class="a" style="left:1163px;top:1665px;width:72px;height:31px;background:#537393"></div>
<div class="a" style="left:1307px;top:1665px;width:72px;height:31px;background:#537393"></div>
<div class="a" style="left:1451px;top:1665px;width:72px;height:31px;background:#537393"></div>
<div class="a" style="left:1595px;top:1665px;width:72px;height:31px;background:#537393"></div>
<div class="a" style="left:1883px;top:1665px;width:72px;height:31px;background:#537393"></div>
<div class="a" style="left:2171px;top:1665px;width:72px;height:31px;background:#537393"></div>
<div class="a" style="left:2603px;top:1665px;width:72px;height:31px;background:#537393"></div>
<div class="a" style="left:3035px;top:1665px;width:72px;height:31px;background:#537393"></div>
<div class="a" style="left:875px;top:1727px;width:72px;height:31px;background:#3e4651"></div>
<div class="a" style="left:2171px;top:1727px;width:72px;height:31px;background:#3e4651"></div>
<div class="a" style="left:2603px;top:1727px;width:72px;height:31px;background:#3e4651"></div>
<div class="a" style="left:2891px;top:1634px;width:72px;height:31px;background:#5f5343"></div>
<div class="a" style="left:2895px;top:1665px;width:64px;height:31px;background:repeating-linear-gradient(45deg,#3d5573 0 5px,#7f9ab5 5px 10px)"></div>
<div class="a" style="left:2923px;top:1677px;width:7px;height:7px;border-radius:50%;background:#e39a34"></div>
<div class="a" style="left:2891px;top:1626px;width:72px;height:8px;background:#e39a34"></div>
<div class="a" style="left:2891px;top:1634px;width:4px;height:155px;background:repeating-linear-gradient(180deg,#e39a34 0 30px,#383838 30px 31px)"></div>
<div class="a" style="left:2959px;top:1634px;width:4px;height:155px;background:repeating-linear-gradient(180deg,#e39a34 0 30px,#383838 30px 31px)"></div>
<div class="a" style="left:2px;top:1634px;width:263px;height:30px;background:#383838"></div>
<div class="a" style="left:2px;top:1663px;width:263px;height:2px;background:#414141"></div>
<svg style="left:6px;top:1641px" width="16" height="16" viewBox="0 0 24 24"><path d="M13 2 L22 11 L18 12 L12 18 L11 14 L3 22 L2 21 L10 13 L6 12 L12 6 Z" fill="#d2d2d2"/></svg>
<div class="t" style="left:28px;top:1642px;font-size:15.5px;color:#dcdcdc;">Paint Layer 2</div>
<svg style="left:193px;top:1642px" width="16" height="16" viewBox="0 0 24 24"><ellipse cx="12" cy="13" rx="9.5" ry="7.5" stroke="#6a6a6a" stroke-width="1.3" fill="none"/><path d="M3 15 C7 21 17 21 21 15" stroke="#808080" stroke-width="1.6" fill="none"/></svg>
<svg style="left:212px;top:1642px" width="16" height="16" viewBox="0 0 24 24"><path d="M7 11 V7 C7 2 17 2 17 7 V11" stroke="#d2d2d2" stroke-width="2.6" fill="none"/><rect x="4" y="11" width="16" height="11" fill="#d2d2d2"/></svg>
<svg style="left:229px;top:1640px" width="18" height="18" viewBox="0 0 24 24"><text x="12" y="20" font-family="Liberation Sans" font-style="italic" font-size="24" text-anchor="middle" fill="#7a7a7a">α</text></svg>
<div class="a" style="left:248px;top:1642px;width:15px;height:15px;background:repeating-conic-gradient(#6e6e6e 0 25%,#555555 0 50%) 0 0/10px 10px"></div>
<div class="a" style="left:2px;top:1665px;width:263px;height:30px;background:#383838"></div>
<div class="a" style="left:2px;top:1694px;width:263px;height:2px;background:#414141"></div>
<div class="a" style="left:2px;top:1663px;width:263px;height:2px;background:#52708f"></div>
<div class="a" style="left:2px;top:1695px;width:263px;height:2px;background:#52708f"></div>
<svg style="left:6px;top:1672px" width="16" height="16" viewBox="0 0 24 24"><path d="M13 2 L22 11 L18 12 L12 18 L11 14 L3 22 L2 21 L10 13 L6 12 L12 6 Z" fill="#d2d2d2"/></svg>
<div class="t" style="left:28px;top:1673px;font-size:15.5px;color:#dcdcdc;">keyframes</div>
<svg style="left:174px;top:1674px" width="16" height="16" viewBox="0 0 24 24"><path d="M2 12 C6 5 18 5 22 12" stroke="#d2d2d2" stroke-width="1.6" fill="none"/><path d="M3 16 C7 21 17 21 21 16" stroke="#d2d2d2" stroke-width="1.4" fill="none"/><circle cx="12" cy="11" r="4.5" fill="#d2d2d2"/></svg>
<svg style="left:193px;top:1673px" width="16" height="16" viewBox="0 0 24 24"><path d="M7 11 V8 C7 3 16 3 17 7" stroke="#7a7a7a" stroke-width="2.6" fill="none"/><rect x="4" y="11" width="16" height="11" fill="#7a7a7a"/></svg>
<svg style="left:211px;top:1671px" width="18" height="18" viewBox="0 0 24 24"><text x="12" y="20" font-family="Liberation Sans" font-style="italic" font-size="24" text-anchor="middle" fill="#7a7a7a">α</text></svg>
<div class="a" style="left:229px;top:1673px;width:15px;height:15px;background:repeating-conic-gradient(#6e6e6e 0 25%,#555555 0 50%) 0 0/10px 10px"></div>
<svg style="left:247px;top:1674px" width="16" height="16" viewBox="0 0 24 24"><path d="M12 5 C7 5 6 9 7 12 C8 14 9 15 9 17 H15 C15 15 16 14 17 12 C18 9 17 5 12 5 Z" fill="#d2d2d2"/><rect x="9.5" y="18" width="5" height="3" fill="#d2d2d2"/><path d="M12 1 V3 M3 10 H1 M23 10 H21 M5 4 L4 3 M19 4 L20 3" stroke="#d2d2d2" stroke-width="1.6"/></svg>
<div class="a" style="left:2px;top:1696px;width:263px;height:30px;background:#383838"></div>
<div class="a" style="left:2px;top:1725px;width:263px;height:2px;background:#414141"></div>
<svg style="left:6px;top:1703px" width="16" height="16" viewBox="0 0 24 24"><path d="M13 2 L22 11 L18 12 L12 18 L11 14 L3 22 L2 21 L10 13 L6 12 L12 6 Z" fill="#d2d2d2"/></svg>
<div class="t" style="left:28px;top:1704px;font-size:15.5px;color:#dcdcdc;">timingAdditio...</div>
<svg style="left:174px;top:1705px" width="16" height="16" viewBox="0 0 24 24"><path d="M2 12 C6 5 18 5 22 12" stroke="#d2d2d2" stroke-width="1.6" fill="none"/><path d="M3 16 C7 21 17 21 21 16" stroke="#d2d2d2" stroke-width="1.4" fill="none"/><circle cx="12" cy="11" r="4.5" fill="#d2d2d2"/></svg>
<svg style="left:193px;top:1704px" width="16" height="16" viewBox="0 0 24 24"><path d="M7 11 V7 C7 2 17 2 17 7 V11" stroke="#d2d2d2" stroke-width="2.6" fill="none"/><rect x="4" y="11" width="16" height="11" fill="#d2d2d2"/></svg>
<svg style="left:211px;top:1702px" width="18" height="18" viewBox="0 0 24 24"><text x="12" y="20" font-family="Liberation Sans" font-style="italic" font-size="24" text-anchor="middle" fill="#7a7a7a">α</text></svg>
<div class="a" style="left:229px;top:1704px;width:15px;height:15px;background:repeating-conic-gradient(#6e6e6e 0 25%,#555555 0 50%) 0 0/10px 10px"></div>
<svg style="left:247px;top:1705px" width="16" height="16" viewBox="0 0 24 24"><path d="M12 5 C7 5 6 9 7 12 C8 14 9 15 9 17 H15 C15 15 16 14 17 12 C18 9 17 5 12 5 Z" fill="#d2d2d2"/><rect x="9.5" y="18" width="5" height="3" fill="#d2d2d2"/><path d="M12 1 V3 M3 10 H1 M23 10 H21 M5 4 L4 3 M19 4 L20 3" stroke="#d2d2d2" stroke-width="1.6"/></svg>
<div class="a" style="left:2px;top:1727px;width:263px;height:30px;background:#383838"></div>
<div class="a" style="left:2px;top:1756px;width:263px;height:2px;background:#414141"></div>
<svg style="left:6px;top:1734px" width="16" height="16" viewBox="0 0 24 24"><path d="M13 2 L22 11 L18 12 L12 18 L11 14 L3 22 L2 21 L10 13 L6 12 L12 6 Z" fill="#d2d2d2"/></svg>
<div class="t" style="left:28px;top:1735px;font-size:15.5px;color:#dcdcdc;">timingCharts</div>
<svg style="left:174px;top:1736px" width="16" height="16" viewBox="0 0 24 24"><path d="M2 12 C6 5 18 5 22 12" stroke="#d2d2d2" stroke-width="1.6" fill="none"/><path d="M3 16 C7 21 17 21 21 16" stroke="#d2d2d2" stroke-width="1.4" fill="none"/><circle cx="12" cy="11" r="4.5" fill="#d2d2d2"/></svg>
<svg style="left:193px;top:1735px" width="16" height="16" viewBox="0 0 24 24"><path d="M7 11 V7 C7 2 17 2 17 7 V11" stroke="#d2d2d2" stroke-width="2.6" fill="none"/><rect x="4" y="11" width="16" height="11" fill="#d2d2d2"/></svg>
<svg style="left:211px;top:1733px" width="18" height="18" viewBox="0 0 24 24"><text x="12" y="20" font-family="Liberation Sans" font-style="italic" font-size="24" text-anchor="middle" fill="#7a7a7a">α</text></svg>
<div class="a" style="left:229px;top:1735px;width:15px;height:15px;background:repeating-conic-gradient(#6e6e6e 0 25%,#555555 0 50%) 0 0/10px 10px"></div>
<svg style="left:247px;top:1736px" width="16" height="16" viewBox="0 0 24 24"><path d="M12 5 C8 5 7 9 8 12 C9 14 10 15 10 17 H14 C14 15 15 14 16 12 C17 9 16 5 12 5 Z" fill="#6f6f6f"/><rect x="10.5" y="18" width="3" height="3" fill="#6f6f6f"/></svg>
<div class="a" style="left:2px;top:1758px;width:263px;height:30px;background:#383838"></div>
<div class="a" style="left:2px;top:1787px;width:263px;height:2px;background:#414141"></div>
<svg style="left:6px;top:1765px" width="16" height="16" viewBox="0 0 24 24"><path d="M13 2 L22 11 L18 12 L12 18 L11 14 L3 22 L2 21 L10 13 L6 12 L12 6 Z" fill="#d2d2d2"/></svg>
<div class="t" style="left:28px;top:1766px;font-size:15.5px;color:#dcdcdc;">Background</div>
<svg style="left:193px;top:1767px" width="16" height="16" viewBox="0 0 24 24"><path d="M2 12 C6 5 18 5 22 12" stroke="#d2d2d2" stroke-width="1.6" fill="none"/><path d="M3 16 C7 21 17 21 21 16" stroke="#d2d2d2" stroke-width="1.4" fill="none"/><circle cx="12" cy="11" r="4.5" fill="#d2d2d2"/></svg>
<svg style="left:212px;top:1766px" width="16" height="16" viewBox="0 0 24 24"><path d="M7 11 V7 C7 2 17 2 17 7 V11" stroke="#d2d2d2" stroke-width="2.6" fill="none"/><rect x="4" y="11" width="16" height="11" fill="#d2d2d2"/></svg>
<svg style="left:229px;top:1764px" width="18" height="18" viewBox="0 0 24 24"><text x="12" y="20" font-family="Liberation Sans" font-style="italic" font-size="24" text-anchor="middle" fill="#7a7a7a">α</text></svg>
<div class="a" style="left:248px;top:1766px;width:15px;height:15px;background:repeating-conic-gradient(#6e6e6e 0 25%,#555555 0 50%) 0 0/10px 10px"></div>
<div class="a" style="left:2px;top:1789px;width:263px;height:237px;background:#464646"></div>
<div class="a" style="left:0;top:2026px;width:3245px;height:20px;background:#3a3a3a"></div>
<div class="a" style="left:1px;top:2026px;width:20px;height:20px;background:#444;border:1px solid #555"></div>
<svg style="left:7px;top:2030px" width="7" height="12" viewBox="0 0 7 12"><path d="M7 0 V12 L0 6 Z" fill="#8e8e8e"/></svg>
<div class="a" style="left:1581px;top:2026px;width:497px;height:20px;background:#424242;border:1px solid #505050"></div>
<div class="a" style="left:3224px;top:2026px;width:20px;height:20px;background:#444;border:1px solid #555"></div>
<svg style="left:3231px;top:2030px" width="7" height="12" viewBox="0 0 7 12"><path d="M0 0 V12 L7 6 Z" fill="#8e8e8e"/></svg>
<div class="a" style="left:3245px;top:1525px;width:593px;height:521px;background:#474747"></div>
<div class="a" style="left:3245px;top:1525px;width:4px;height:521px;background:#404040"></div>
<div class="a" style="left:3250px;top:1760px;width:2px;height:16px;background:repeating-linear-gradient(180deg,#8a8a8a 0 1px,transparent 1px 3px)"></div>
<svg style="left:3255px;top:1535px" width="18" height="18" viewBox="0 0 24 24"><circle cx="12" cy="12" r="10" stroke="#d2d2d2" stroke-width="1.6" fill="none"/><path d="M8.5 10 V8 C8.5 4.5 15.5 4.5 15.5 8" stroke="#d2d2d2" stroke-width="1.8" fill="none"/><rect x="7" y="11" width="10" height="6" fill="#d2d2d2"/></svg>
<div class="t" style="left:3278px;top:1535px;font-size:15.5px;color:#dcdcdc;">Onion Skins</div>
<svg style="left:3801px;top:1535px" width="15" height="15" viewBox="0 0 24 24"><path d="M2 10 H13 V22 H2 Z M8 4 H22 V15 H13 M8 10 V4" stroke="#d2d2d2" stroke-width="2" fill="none"/><path d="M8 5 H22" stroke="#d2d2d2" stroke-width="3"/><path d="M2 11 H13" stroke="#d2d2d2" stroke-width="3"/></svg>
<svg style="left:3825px;top:1537px" width="12" height="12" viewBox="0 0 24 24"><path d="M3 3 L21 21 M21 3 L3 21" stroke="#d2d2d2" stroke-width="2.2"/></svg>
<div class="a" style="left:3265px;top:1564px;width:564px;height:306px;background:#363636"></div>
<div class="t" style="left:3264.0px;top:1572px;font-size:16px;color:#d8d8d8;">-10</div>
<div class="a" style="left:3269px;top:1843px;width:19px;height:24px;background:#828282"></div>
<div class="t" style="left:3294.5px;top:1572px;font-size:16px;color:#d8d8d8;">-9</div>
<div class="a" style="left:3295px;top:1829px;width:19px;height:38px;background:#828282"></div>
<div class="t" style="left:3319.5px;top:1572px;font-size:16px;color:#d8d8d8;">-8</div>
<div class="a" style="left:3320px;top:1816px;width:19px;height:51px;background:#828282"></div>
<div class="t" style="left:3345.5px;top:1572px;font-size:16px;color:#d8d8d8;">-7</div>
<div class="a" style="left:3346px;top:1797px;width:19px;height:70px;background:#828282"></div>
<div class="t" style="left:3371.5px;top:1572px;font-size:16px;color:#d8d8d8;">-6</div>
<div class="a" style="left:3372px;top:1776px;width:19px;height:91px;background:#828282"></div>
<div class="t" style="left:3396.5px;top:1572px;font-size:16px;color:#d8d8d8;">-5</div>
<div class="a" style="left:3397px;top:1754px;width:19px;height:113px;background:#828282"></div>
<div class="t" style="left:3422.5px;top:1572px;font-size:16px;color:#d8d8d8;">-4</div>
<div class="a" style="left:3423px;top:1813px;width:19px;height:54px;background:#828282"></div>
<div class="t" style="left:3447.5px;top:1572px;font-size:16px;color:#d8d8d8;">-3</div>
<div class="a" style="left:3448px;top:1746px;width:19px;height:121px;background:#828282"></div>
<div class="t" style="left:3473.5px;top:1572px;font-size:16px;color:#d8d8d8;">-2</div>
<div class="a" style="left:3474px;top:1720px;width:19px;height:147px;background:#828282"></div>
<div class="a" style="left:3500px;top:1568px;width:19px;height:24px;background:#3f546b"></div>
<div class="t" style="left:3499.5px;top:1572px;font-size:16px;color:#d8d8d8;">-1</div>
<div class="a" style="left:3500px;top:1773px;width:19px;height:94px;background:#52708f"></div>
<div class="a" style="left:3525px;top:1568px;width:45px;height:24px;background:#3f546b"></div>
<div class="t" style="left:3542.0px;top:1572px;font-size:16px;color:#d8d8d8;">0</div>
<div class="a" style="left:3525px;top:1599px;width:45px;height:268px;background:#52708f"></div>
<div class="a" style="left:3577px;top:1568px;width:19px;height:24px;background:#3f546b"></div>
<div class="t" style="left:3581.0px;top:1572px;font-size:16px;color:#d8d8d8;">1</div>
<div class="a" style="left:3577px;top:1773px;width:19px;height:94px;background:#52708f"></div>
<div class="t" style="left:3606.0px;top:1572px;font-size:16px;color:#d8d8d8;">2</div>
<div class="a" style="left:3602px;top:1695px;width:19px;height:172px;background:#828282"></div>
<div class="t" style="left:3632.0px;top:1572px;font-size:16px;color:#d8d8d8;">3</div>
<div class="a" style="left:3628px;top:1712px;width:19px;height:155px;background:#828282"></div>
<div class="t" style="left:3658.0px;top:1572px;font-size:16px;color:#d8d8d8;">4</div>
<div class="a" style="left:3654px;top:1730px;width:19px;height:137px;background:#828282"></div>
<div class="t" style="left:3684.0px;top:1572px;font-size:16px;color:#d8d8d8;">5</div>
<div class="a" style="left:3680px;top:1754px;width:19px;height:113px;background:#828282"></div>
<div class="t" style="left:3709.0px;top:1572px;font-size:16px;color:#d8d8d8;">6</div>
<div class="a" style="left:3705px;top:1776px;width:19px;height:91px;background:#828282"></div>
<div class="t" style="left:3735.0px;top:1572px;font-size:16px;color:#d8d8d8;">7</div>
<div class="a" style="left:3731px;top:1797px;width:19px;height:70px;background:#828282"></div>
<div class="t" style="left:3760.0px;top:1572px;font-size:16px;color:#d8d8d8;">8</div>
<div class="a" style="left:3756px;top:1816px;width:19px;height:51px;background:#828282"></div>
<div class="t" style="left:3786.0px;top:1572px;font-size:16px;color:#d8d8d8;">9</div>
<div class="a" style="left:3782px;top:1829px;width:19px;height:38px;background:#828282"></div>
<div class="t" style="left:3806.5px;top:1572px;font-size:16px;color:#d8d8d8;">10</div>
<div class="a" style="left:3807px;top:1843px;width:19px;height:24px;background:#828282"></div>
<div class="a" style="left:3291px;top:1564px;width:1px;height:306px;background:#3b3b3b"></div>
<div class="a" style="left:3317px;top:1564px;width:1px;height:306px;background:#3b3b3b"></div>
<div class="a" style="left:3342px;top:1564px;width:1px;height:306px;background:#3b3b3b"></div>
<div class="a" style="left:3368px;top:1564px;width:1px;height:306px;background:#3b3b3b"></div>
<div class="a" style="left:3394px;top:1564px;width:1px;height:306px;background:#3b3b3b"></div>
<div class="a" style="left:3419px;top:1564px;width:1px;height:306px;background:#3b3b3b"></div>
<div class="a" style="left:3445px;top:1564px;width:1px;height:306px;background:#3b3b3b"></div>
<div class="a" style="left:3470px;top:1564px;width:1px;height:306px;background:#3b3b3b"></div>
<div class="a" style="left:3496px;top:1564px;width:1px;height:306px;background:#3b3b3b"></div>
<div class="a" style="left:3522px;top:1564px;width:1px;height:306px;background:#3b3b3b"></div>
<div class="a" style="left:3573px;top:1564px;width:1px;height:306px;background:#3b3b3b"></div>
<div class="a" style="left:3599px;top:1564px;width:1px;height:306px;background:#3b3b3b"></div>
<div class="a" style="left:3624px;top:1564px;width:1px;height:306px;background:#3b3b3b"></div>
<div class="a" style="left:3650px;top:1564px;width:1px;height:306px;background:#3b3b3b"></div>
<div class="a" style="left:3676px;top:1564px;width:1px;height:306px;background:#3b3b3b"></div>
<div class="a" style="left:3701px;top:1564px;width:1px;height:306px;background:#3b3b3b"></div>
<div class="a" style="left:3727px;top:1564px;width:1px;height:306px;background:#3b3b3b"></div>
<div class="a" style="left:3752px;top:1564px;width:1px;height:306px;background:#3b3b3b"></div>
<div class="a" style="left:3778px;top:1564px;width:1px;height:306px;background:#3b3b3b"></div>
<div class="a" style="left:3804px;top:1564px;width:1px;height:306px;background:#3b3b3b"></div>
<div class="a" style="left:3265px;top:1593px;width:564px;height:1px;background:#3a3a3a"></div>
<div class="a" style="left:3266px;top:1881px;width:20px;height:21px;background:#343434;border:1px solid #3e3e3e"></div>
<div class="t" style="left:3291px;top:1884px;font-size:15.5px;color:#dcdcdc;">Filter Onion Skins by Frame Color</div>
<div class="a" style="left:3266px;top:1905px;width:563px;height:19px;border:1px solid #4f4f4f;border-radius:2px"></div>
<div class="a" style="left:3266px;top:1948px;width:526px;height:1px;background:#353535"></div>
<div class="a" style="left:3797px;top:1935px;width:32px;height:29px;background:#444;border:1px solid #383838;border-radius:3px"></div>
<svg style="left:3803px;top:1942px" width="20" height="13" viewBox="0 0 20 13"><path d="M2 2 L10 11 L18 2" stroke="#d2d2d2" stroke-width="2.2" fill="none"/></svg>
<div class="a" style="left:3266px;top:1973px;width:563px;height:29px;background:#363636;border:1px solid #4a4a4a;border-radius:3px;overflow:hidden"><div class="a" style="left:0;top:0;width:417px;height:27px;background:#52708f"></div></div>
<div class="a" style="left:3808px;top:1974px;width:20px;height:27px;background:#3d3d3d"></div>
<div class="t" style="left:3495px;top:1980px;font-size:15px;color:#e4e4e4;">Tint: 77.00%</div>
<svg style="left:3811px;top:1976px" width="14" height="22" viewBox="0 0 14 22"><path d="M2 8 L7 3 L12 8 Z M2 14 L7 19 L12 14 Z" fill="#777"/></svg>
<div class="a" style="left:3266px;top:2011px;width:49px;height:25px;background:#3b3b3b;border:1px solid #333;border-radius:3px"></div>
<div class="a" style="left:3271px;top:2016px;width:40px;height:15px;background:#ff0000;border:1px solid #222"></div>
<div class="t" style="left:3322px;top:2015px;font-size:15.5px;color:#dcdcdc;">Previous frames</div>
<div class="t" style="left:3688px;top:2015px;font-size:15.5px;color:#dcdcdc;">Next frames</div>
<div class="a" style="left:3779px;top:2011px;width:50px;height:25px;background:#3b3b3b;border:1px solid #333;border-radius:3px"></div>
<div class="a" style="left:3784px;top:2016px;width:40px;height:15px;background:#00ee00;border:1px solid #222"></div>
<div class="a" style="left:0;top:2046px;width:3838px;height:43px;background:#474747"></div>
<svg style="left:6px;top:2057px" width="14" height="14" viewBox="0 0 24 24"><rect x="2" y="2" width="20" height="20" stroke="#d2d2d2" stroke-width="1.5" fill="none"/><circle cx="12" cy="12" r="6" stroke="#d2d2d2" stroke-width="1.2" fill="none" stroke-dasharray="1.5 1.5"/></svg>
<div class="t" style="left:37px;top:2060px;font-size:16.5px;color:#dcdcdc;">a) Eraser Circle</div>
<div class="t" style="left:1209px;top:2060px;font-size:17.5px;color:#dcdcdc;">RGB/Alpha (8-bit integer/channel)&nbsp; sRGB-elle-V2-srgbtrc.icc</div>
<div class="a" style="left:3246px;top:2050px;width:173px;height:35px;border:1px solid #3c3c3c"></div>
<div class="a" style="left:3248px;top:2053px;width:28px;height:30px;background:#52708f;border-radius:2px;opacity:0.85"></div>
<div class="t" style="left:3252px;top:2059px;font-size:17px;color:#dcdcdc;">1,414 <u>x</u> 795 (1.4 GiB)</div>
<div class="a" style="left:3427px;top:2052px;width:31px;height:31px;border-radius:50%;background:#333"></div>
<svg style="left:3427px;top:2052px" width="31" height="31" viewBox="0 0 31 31"><path d="M8 15.5 H24" stroke="#eee" stroke-width="1.6"/><circle cx="8" cy="15.5" r="2" fill="#eee"/><circle cx="24" cy="15.5" r="2" fill="#eee"/></svg>
<div class="t" style="left:3469px;top:2059px;font-size:17px;color:#dcdcdc;">0.00°</div>
<div class="t" style="left:3649px;top:2059px;font-size:17px;color:#dcdcdc;">165.1%</div>
<div class="a" style="left:3725px;top:2065px;width:80px;height:7px;background:#363636;border-radius:3px"></div>
<div class="a" style="left:3725px;top:2065px;width:25px;height:7px;background:#52708f;border-radius:3px"></div>
<div class="a" style="left:3749px;top:2058px;width:19px;height:21px;background:#404040;border:1px solid #333;border-radius:3px"></div>
<svg style="left:3812px;top:2058px" width="23" height="23" viewBox="0 0 24 24"><rect x="2" y="2" width="20" height="14" stroke="#d2d2d2" stroke-width="1.6" fill="none"/><path d="M12 16 V21 M6 21 H18" stroke="#d2d2d2" stroke-width="1.6"/><circle cx="12" cy="9" r="1.3" fill="#d2d2d2"/></svg>
<div class="a" style="left:0;top:2089px;width:3838px;height:3px;background:#ececec"></div>
</body></html>
